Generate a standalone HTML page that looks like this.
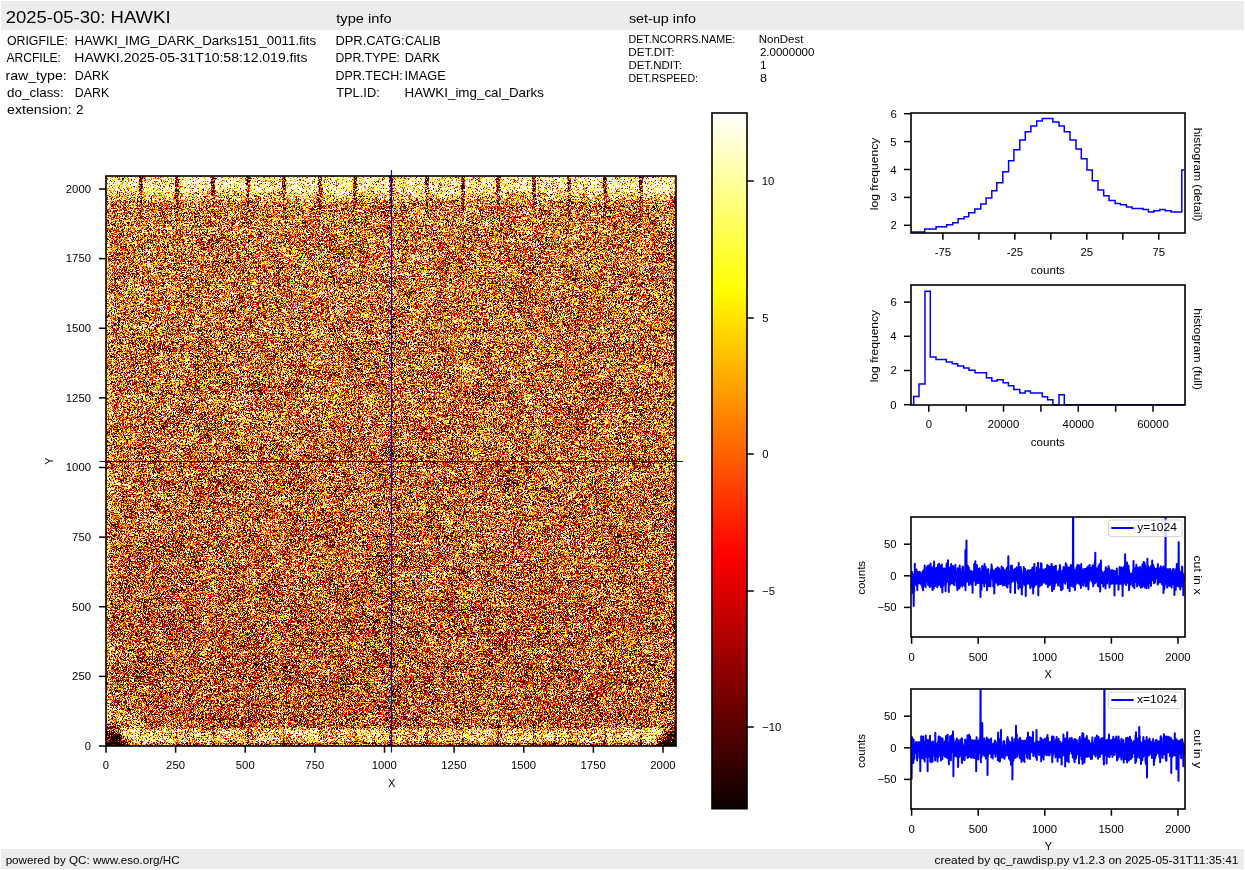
<!DOCTYPE html>
<html><head><meta charset="utf-8"><style>
html,body{margin:0;padding:0;background:#fff;width:1245px;height:870px;overflow:hidden}
#img{position:absolute;left:106px;top:176px;width:570px;height:570px}
#s{position:absolute;left:0;top:0}
text{font-family:"Liberation Sans", sans-serif;fill:#000}
</style></head><body>
<svg style="position:absolute;left:106px;top:176px" width="570" height="570"><filter id="nz" x="0" y="0" width="100%" height="100%" color-interpolation-filters="sRGB"><feTurbulence type="fractalNoise" baseFrequency="0.95" numOctaves="2" seed="5"/><feColorMatrix type="matrix" values="1 0 0 0 0 1 0 0 0 0 1 0 0 0 0 0 0 0 0 1"/><feComponentTransfer><feFuncR type="table" tableValues="0.000 0.000 0.000 0.000 0.000 0.000 0.000 0.000 0.000 0.000 0.000 0.086 0.342 0.599 0.856 1.000 1.000 1.000 1.000 1.000 1.000 1.000 1.000 1.000 1.000 1.000 1.000 1.000 1.000 1.000 1.000 1.000 1.000"/><feFuncG type="table" tableValues="0.000 0.000 0.000 0.000 0.000 0.000 0.000 0.000 0.000 0.000 0.000 0.000 0.000 0.000 0.000 0.108 0.354 0.600 0.846 1.000 1.000 1.000 1.000 1.000 1.000 1.000 1.000 1.000 1.000 1.000 1.000 1.000 1.000"/><feFuncB type="table" tableValues="0.000 0.000 0.000 0.000 0.000 0.000 0.000 0.000 0.000 0.000 0.000 0.000 0.000 0.000 0.000 0.000 0.000 0.000 0.000 0.139 0.508 0.877 1.000 1.000 1.000 1.000 1.000 1.000 1.000 1.000 1.000 1.000 1.000"/></feComponentTransfer></filter><rect width="570" height="570" fill="#c8702c" filter="url(#nz)"/><rect width="570" height="20" fill="#fff8c0" opacity="0.5"/><rect y="553" width="570" height="14" fill="#fff8c0" opacity="0.4"/></svg>
<canvas id="img" width="570" height="570"></canvas>
<svg id="s" width="1245" height="870">
<rect x="1" y="1" width="1243" height="29" fill="#ececec"/>
<rect x="1" y="849" width="1243" height="20" fill="#ececec"/>
<text x="5.67" y="22.80" font-size="17.15" textLength="164.93" lengthAdjust="spacingAndGlyphs">2025-05-30: HAWKI</text>
<text x="336.28" y="22.90" font-size="12.6" textLength="55.34" lengthAdjust="spacingAndGlyphs">type info</text>
<text x="628.90" y="22.80" font-size="12.6" textLength="67.10" lengthAdjust="spacingAndGlyphs">set-up info</text>
<text x="6.92" y="45.30" font-size="12.35" textLength="61.01" lengthAdjust="spacingAndGlyphs">ORIGFILE:</text>
<text x="74.41" y="45.30" font-size="12.35" textLength="241.77" lengthAdjust="spacingAndGlyphs">HAWKI_IMG_DARK_Darks151_0011.fits</text>
<text x="6.38" y="62.00" font-size="12.35" textLength="54.53" lengthAdjust="spacingAndGlyphs">ARCFILE:</text>
<text x="74.35" y="62.00" font-size="12.35" textLength="233.15" lengthAdjust="spacingAndGlyphs">HAWKI.2025-05-31T10:58:12.019.fits</text>
<text x="5.46" y="79.60" font-size="12.35" textLength="61.33" lengthAdjust="spacingAndGlyphs">raw_type:</text>
<text x="74.79" y="79.60" font-size="12.35" textLength="34.35" lengthAdjust="spacingAndGlyphs">DARK</text>
<text x="7.14" y="96.80" font-size="12.35" textLength="56.69" lengthAdjust="spacingAndGlyphs">do_class:</text>
<text x="74.79" y="96.80" font-size="12.35" textLength="34.35" lengthAdjust="spacingAndGlyphs">DARK</text>
<text x="7.10" y="113.70" font-size="12.35" textLength="64.60" lengthAdjust="spacingAndGlyphs">extension:</text>
<text x="76.02" y="113.70" font-size="12.35" textLength="7.57" lengthAdjust="spacingAndGlyphs">2</text>
<text x="335.46" y="44.80" font-size="12.35" textLength="69.20" lengthAdjust="spacingAndGlyphs">DPR.CATG:</text>
<text x="405.07" y="44.80" font-size="12.35" textLength="35.57" lengthAdjust="spacingAndGlyphs">CALIB</text>
<text x="335.50" y="61.90" font-size="12.35" textLength="64.52" lengthAdjust="spacingAndGlyphs">DPR.TYPE:</text>
<text x="404.65" y="61.90" font-size="12.35" textLength="35.49" lengthAdjust="spacingAndGlyphs">DARK</text>
<text x="335.47" y="79.70" font-size="12.35" textLength="67.37" lengthAdjust="spacingAndGlyphs">DPR.TECH:</text>
<text x="404.52" y="79.70" font-size="12.35" textLength="41.13" lengthAdjust="spacingAndGlyphs">IMAGE</text>
<text x="336.21" y="96.80" font-size="12.35" textLength="43.56" lengthAdjust="spacingAndGlyphs">TPL.ID:</text>
<text x="404.61" y="96.80" font-size="12.35" textLength="139.28" lengthAdjust="spacingAndGlyphs">HAWKI_img_cal_Darks</text>
<text x="628.43" y="43.00" font-size="11.05" textLength="106.94" lengthAdjust="spacingAndGlyphs">DET.NCORRS.NAME:</text>
<text x="758.76" y="43.00" font-size="11.05" textLength="44.62" lengthAdjust="spacingAndGlyphs">NonDest</text>
<text x="628.39" y="55.80" font-size="11.05" textLength="46.22" lengthAdjust="spacingAndGlyphs">DET.DIT:</text>
<text x="759.92" y="55.80" font-size="11.05" textLength="54.53" lengthAdjust="spacingAndGlyphs">2.0000000</text>
<text x="628.40" y="68.70" font-size="11.05" textLength="53.60" lengthAdjust="spacingAndGlyphs">DET.NDIT:</text>
<text x="759.90" y="68.70" font-size="11.05" textLength="6.58" lengthAdjust="spacingAndGlyphs">1</text>
<text x="628.44" y="81.70" font-size="11.05" textLength="69.61" lengthAdjust="spacingAndGlyphs">DET.RSPEED:</text>
<text x="759.95" y="81.70" font-size="11.05" textLength="6.99" lengthAdjust="spacingAndGlyphs">8</text>
<text x="5.65" y="863.80" font-size="10.4" textLength="173.89" lengthAdjust="spacingAndGlyphs">powered by QC: www.eso.org/HC</text>
<text x="934.60" y="863.80" font-size="10.4" textLength="303.88" lengthAdjust="spacingAndGlyphs">created by qc_rawdisp.py v1.2.3 on 2025-05-31T11:35:41</text>
<line x1="391.5" y1="170" x2="391.5" y2="752.5" stroke="#0000ff" stroke-width="1.15"/>
<line x1="99.5" y1="461.5" x2="683" y2="461.5" stroke="#0000ff" stroke-width="1.15"/>
<rect x="106" y="176" width="570" height="570" fill="none" stroke="#000" stroke-width="1.6"/>
<line x1="99" y1="746.0" x2="106" y2="746.0" stroke="#000" stroke-width="1.5"/>
<text x="84.74" y="749.80" font-size="11" textLength="6.30" lengthAdjust="spacingAndGlyphs">0</text>
<line x1="106.0" y1="746" x2="106.0" y2="752.7" stroke="#000" stroke-width="1.5"/>
<text x="102.85" y="768.90" font-size="11" textLength="6.30" lengthAdjust="spacingAndGlyphs">0</text>
<line x1="99" y1="676.375" x2="106" y2="676.375" stroke="#000" stroke-width="1.5"/>
<text x="72.14" y="680.17" font-size="11" textLength="18.90" lengthAdjust="spacingAndGlyphs">250</text>
<line x1="175.625" y1="746" x2="175.625" y2="752.7" stroke="#000" stroke-width="1.5"/>
<text x="166.11" y="768.90" font-size="11" textLength="18.90" lengthAdjust="spacingAndGlyphs">250</text>
<line x1="99" y1="606.75" x2="106" y2="606.75" stroke="#000" stroke-width="1.5"/>
<text x="72.14" y="610.55" font-size="11" textLength="18.90" lengthAdjust="spacingAndGlyphs">500</text>
<line x1="245.25" y1="746" x2="245.25" y2="752.7" stroke="#000" stroke-width="1.5"/>
<text x="235.79" y="768.90" font-size="11" textLength="18.90" lengthAdjust="spacingAndGlyphs">500</text>
<line x1="99" y1="537.125" x2="106" y2="537.125" stroke="#000" stroke-width="1.5"/>
<text x="72.14" y="540.92" font-size="11" textLength="18.90" lengthAdjust="spacingAndGlyphs">750</text>
<line x1="314.875" y1="746" x2="314.875" y2="752.7" stroke="#000" stroke-width="1.5"/>
<text x="305.35" y="768.90" font-size="11" textLength="18.90" lengthAdjust="spacingAndGlyphs">750</text>
<line x1="99" y1="467.5" x2="106" y2="467.5" stroke="#000" stroke-width="1.5"/>
<text x="65.84" y="471.30" font-size="11" textLength="25.20" lengthAdjust="spacingAndGlyphs">1000</text>
<line x1="384.5" y1="746" x2="384.5" y2="752.7" stroke="#000" stroke-width="1.5"/>
<text x="371.69" y="768.90" font-size="11" textLength="25.20" lengthAdjust="spacingAndGlyphs">1000</text>
<line x1="99" y1="397.87499999999994" x2="106" y2="397.87499999999994" stroke="#000" stroke-width="1.5"/>
<text x="65.84" y="401.67" font-size="11" textLength="25.20" lengthAdjust="spacingAndGlyphs">1250</text>
<line x1="454.12500000000006" y1="746" x2="454.12500000000006" y2="752.7" stroke="#000" stroke-width="1.5"/>
<text x="441.31" y="768.90" font-size="11" textLength="25.20" lengthAdjust="spacingAndGlyphs">1250</text>
<line x1="99" y1="328.24999999999994" x2="106" y2="328.24999999999994" stroke="#000" stroke-width="1.5"/>
<text x="65.84" y="332.05" font-size="11" textLength="25.20" lengthAdjust="spacingAndGlyphs">1500</text>
<line x1="523.75" y1="746" x2="523.75" y2="752.7" stroke="#000" stroke-width="1.5"/>
<text x="510.94" y="768.90" font-size="11" textLength="25.20" lengthAdjust="spacingAndGlyphs">1500</text>
<line x1="99" y1="258.62499999999994" x2="106" y2="258.62499999999994" stroke="#000" stroke-width="1.5"/>
<text x="65.84" y="262.42" font-size="11" textLength="25.20" lengthAdjust="spacingAndGlyphs">1750</text>
<line x1="593.375" y1="746" x2="593.375" y2="752.7" stroke="#000" stroke-width="1.5"/>
<text x="580.56" y="768.90" font-size="11" textLength="25.20" lengthAdjust="spacingAndGlyphs">1750</text>
<line x1="99" y1="189.0" x2="106" y2="189.0" stroke="#000" stroke-width="1.5"/>
<text x="65.84" y="192.80" font-size="11" textLength="25.20" lengthAdjust="spacingAndGlyphs">2000</text>
<line x1="663.0" y1="746" x2="663.0" y2="752.7" stroke="#000" stroke-width="1.5"/>
<text x="650.33" y="768.90" font-size="11" textLength="25.20" lengthAdjust="spacingAndGlyphs">2000</text>
<text x="387.92" y="787.00" font-size="11" textLength="7.34" lengthAdjust="spacingAndGlyphs">X</text>
<text x="-3.67" y="0" font-size="11" textLength="7.34" lengthAdjust="spacingAndGlyphs" transform="translate(53.00 461.00) rotate(-90)">Y</text>
<defs><linearGradient id="hot" x1="0" y1="1" x2="0" y2="0"><stop offset="0" stop-color="#0b0000"/><stop offset="0.365" stop-color="#ff0000"/><stop offset="0.746" stop-color="#ffff00"/><stop offset="1" stop-color="#ffffff"/></linearGradient></defs>
<rect x="712" y="113" width="35" height="695.7" fill="url(#hot)"/>
<rect x="712" y="113" width="35" height="695.7" fill="none" stroke="#000" stroke-width="1.6"/>
<line x1="747" y1="181" x2="753.8" y2="181" stroke="#000" stroke-width="1.5"/>
<text x="761.74" y="184.80" font-size="11" textLength="12.60" lengthAdjust="spacingAndGlyphs">10</text>
<line x1="747" y1="318" x2="753.8" y2="318" stroke="#000" stroke-width="1.5"/>
<text x="762.15" y="321.80" font-size="11" textLength="6.30" lengthAdjust="spacingAndGlyphs">5</text>
<line x1="747" y1="454" x2="753.8" y2="454" stroke="#000" stroke-width="1.5"/>
<text x="762.16" y="457.80" font-size="11" textLength="6.30" lengthAdjust="spacingAndGlyphs">0</text>
<line x1="747" y1="591" x2="753.8" y2="591" stroke="#000" stroke-width="1.5"/>
<text x="762.04" y="594.80" font-size="11" textLength="12.92" lengthAdjust="spacingAndGlyphs">−5</text>
<line x1="747" y1="727" x2="753.8" y2="727" stroke="#000" stroke-width="1.5"/>
<text x="762.04" y="730.80" font-size="11" textLength="19.22" lengthAdjust="spacingAndGlyphs">−10</text>
<line x1="904" y1="113.7" x2="911" y2="113.7" stroke="#000" stroke-width="1.5"/>
<text x="890.40" y="117.70" font-size="11" textLength="6.30" lengthAdjust="spacingAndGlyphs">6</text>
<line x1="904" y1="141.6" x2="911" y2="141.6" stroke="#000" stroke-width="1.5"/>
<text x="890.37" y="145.60" font-size="11" textLength="6.30" lengthAdjust="spacingAndGlyphs">5</text>
<line x1="904" y1="169.5" x2="911" y2="169.5" stroke="#000" stroke-width="1.5"/>
<text x="890.23" y="173.50" font-size="11" textLength="6.30" lengthAdjust="spacingAndGlyphs">4</text>
<line x1="904" y1="197.39999999999998" x2="911" y2="197.39999999999998" stroke="#000" stroke-width="1.5"/>
<text x="890.40" y="201.40" font-size="11" textLength="6.30" lengthAdjust="spacingAndGlyphs">3</text>
<line x1="904" y1="225.3" x2="911" y2="225.3" stroke="#000" stroke-width="1.5"/>
<text x="890.47" y="229.30" font-size="11" textLength="6.30" lengthAdjust="spacingAndGlyphs">2</text>
<line x1="942.9" y1="233" x2="942.9" y2="239.7" stroke="#000" stroke-width="1.5"/>
<text x="934.70" y="256.00" font-size="11" textLength="16.38" lengthAdjust="spacingAndGlyphs">-75</text>
<line x1="978.875" y1="233" x2="978.875" y2="239.7" stroke="#000" stroke-width="1.5"/>
<line x1="1014.85" y1="233" x2="1014.85" y2="239.7" stroke="#000" stroke-width="1.5"/>
<text x="1006.65" y="256.00" font-size="11" textLength="16.38" lengthAdjust="spacingAndGlyphs">-25</text>
<line x1="1050.825" y1="233" x2="1050.825" y2="239.7" stroke="#000" stroke-width="1.5"/>
<line x1="1086.8" y1="233" x2="1086.8" y2="239.7" stroke="#000" stroke-width="1.5"/>
<text x="1080.45" y="256.00" font-size="11" textLength="12.60" lengthAdjust="spacingAndGlyphs">25</text>
<line x1="1122.775" y1="233" x2="1122.775" y2="239.7" stroke="#000" stroke-width="1.5"/>
<line x1="1158.75" y1="233" x2="1158.75" y2="239.7" stroke="#000" stroke-width="1.5"/>
<text x="1152.40" y="256.00" font-size="11" textLength="12.60" lengthAdjust="spacingAndGlyphs">75</text>
<text x="1030.81" y="274.00" font-size="11" textLength="34.11" lengthAdjust="spacingAndGlyphs">counts</text>
<text x="-36.61" y="0" font-size="11" textLength="72.44" lengthAdjust="spacingAndGlyphs" transform="translate(877.60 173.60) rotate(-90)">log frequency</text>
<text x="-46.79" y="0" font-size="11" textLength="93.49" lengthAdjust="spacingAndGlyphs" transform="translate(1194.30 174.65) rotate(90)">histogram (detail)</text>
<path d="M911.5,232.1H924.7V228.9H936.1V226.8H946.7V224.8H952.8V222.8H958.1V218.7H964.2V216.8H968.7V212.7H974.8V208.9H980.8V203.9H986.1V197.9H991.8V190.7H996.8V182.8H1002.8V171.7H1008.6V160.8H1013.9V149.7H1019.8V139.9H1025.3V131.8H1030.9V125.9H1036.7V120.9H1042.3V118.6H1052.9V122H1059V125.9H1064.3V131.8H1070V139.9H1076V149H1081.3V158.8H1087V169.9H1092.3V180.8H1098V189.9H1103.7V195.7H1109V200.5H1115.1V203.6H1120.4V204.8H1126.5V206.9H1132.1V208.6H1143.1V209.6H1148.4V211.9H1153.8V210.8H1159.8V209.6H1165.1V210.8H1171.2V211.9H1181.8V169.9H1184.2" fill="none" stroke="#0000ff" stroke-width="1.5"/>
<rect x="911" y="113" width="274" height="120" fill="none" stroke="#000" stroke-width="1.6"/>
<line x1="904" y1="404.7" x2="911" y2="404.7" stroke="#000" stroke-width="1.5"/>
<text x="890.34" y="408.60" font-size="11" textLength="6.30" lengthAdjust="spacingAndGlyphs">0</text>
<line x1="904" y1="370.5" x2="911" y2="370.5" stroke="#000" stroke-width="1.5"/>
<text x="890.47" y="374.40" font-size="11" textLength="6.30" lengthAdjust="spacingAndGlyphs">2</text>
<line x1="904" y1="336.29999999999995" x2="911" y2="336.29999999999995" stroke="#000" stroke-width="1.5"/>
<text x="890.23" y="340.20" font-size="11" textLength="6.30" lengthAdjust="spacingAndGlyphs">4</text>
<line x1="904" y1="302.09999999999997" x2="911" y2="302.09999999999997" stroke="#000" stroke-width="1.5"/>
<text x="890.40" y="306.00" font-size="11" textLength="6.30" lengthAdjust="spacingAndGlyphs">6</text>
<line x1="928.8" y1="405" x2="928.8" y2="411.7" stroke="#000" stroke-width="1.5"/>
<text x="925.65" y="428.00" font-size="11" textLength="6.30" lengthAdjust="spacingAndGlyphs">0</text>
<line x1="966.17" y1="405" x2="966.17" y2="411.7" stroke="#000" stroke-width="1.5"/>
<line x1="1003.54" y1="405" x2="1003.54" y2="411.7" stroke="#000" stroke-width="1.5"/>
<text x="987.72" y="428.00" font-size="11" textLength="31.51" lengthAdjust="spacingAndGlyphs">20000</text>
<line x1="1040.9099999999999" y1="405" x2="1040.9099999999999" y2="411.7" stroke="#000" stroke-width="1.5"/>
<line x1="1078.28" y1="405" x2="1078.28" y2="411.7" stroke="#000" stroke-width="1.5"/>
<text x="1062.62" y="428.00" font-size="11" textLength="31.51" lengthAdjust="spacingAndGlyphs">40000</text>
<line x1="1115.6499999999999" y1="405" x2="1115.6499999999999" y2="411.7" stroke="#000" stroke-width="1.5"/>
<line x1="1153.02" y1="405" x2="1153.02" y2="411.7" stroke="#000" stroke-width="1.5"/>
<text x="1137.20" y="428.00" font-size="11" textLength="31.51" lengthAdjust="spacingAndGlyphs">60000</text>
<text x="1030.81" y="446.00" font-size="11" textLength="34.11" lengthAdjust="spacingAndGlyphs">counts</text>
<text x="-36.61" y="0" font-size="11" textLength="72.44" lengthAdjust="spacingAndGlyphs" transform="translate(877.60 345.70) rotate(-90)">log frequency</text>
<text x="-40.86" y="0" font-size="11" textLength="81.62" lengthAdjust="spacingAndGlyphs" transform="translate(1194.00 349.20) rotate(90)">histogram (full)</text>
<path d="M913.7,404.7V396.5H919V383.9H925V291.2H930.3V356.9H936V359.6H946.3V361.9H952.3V363.7H957.6V366H963.7V368H969V370.2H975.1V372.8H986.5V377.8H991.8V380.9H997.1V379.7H1003.1V382.8H1008.4V385.7H1013.8V389.5H1019.8V393H1025.1V391H1030.4V393H1042.3V396.8H1047.6V399.8H1052.9V404.7H1059V394.8H1064.3V404.7H1184.2" fill="none" stroke="#0000ff" stroke-width="1.5"/>
<rect x="911" y="285" width="274" height="120" fill="none" stroke="#000" stroke-width="1.6"/>
<svg x="911" y="517" width="274" height="120" overflow="hidden"><path transform="translate(-911,-517)" d="M911.6,578.5 911.7,579.7 911.9,571.7 912.0,586.2 912.1,572.8 912.3,575.1 912.4,592.9 912.5,581.0 912.7,575.6 912.8,579.8 912.9,583.7 913.1,591.1 913.2,582.6 913.3,590.1 913.5,578.6 913.6,594.8 913.7,606.1 913.9,576.3 914.0,576.6 914.1,592.1 914.3,573.4 914.4,583.2 914.5,583.6 914.7,583.7 914.8,563.7 914.9,576.4 915.1,573.8 915.2,573.2 915.3,569.9 915.5,576.8 915.6,579.4 915.7,579.9 915.9,574.6 916.0,574.8 916.1,581.0 916.3,585.2 916.4,569.5 916.5,572.5 916.7,576.7 916.8,578.7 916.9,572.2 917.1,580.1 917.2,578.5 917.3,590.2 917.5,572.3 917.6,574.0 917.7,579.1 917.9,574.7 918.0,580.4 918.1,572.9 918.3,577.8 918.4,581.2 918.5,580.0 918.7,572.3 918.8,577.4 918.9,573.0 919.1,583.3 919.2,576.8 919.3,578.5 919.5,571.7 919.6,582.7 919.7,576.1 919.9,575.4 920.0,573.1 920.1,575.1 920.3,572.8 920.4,572.5 920.5,581.2 920.7,583.7 920.8,575.4 920.9,576.2 921.1,575.3 921.2,576.7 921.3,577.0 921.5,581.4 921.6,585.3 921.7,579.1 921.9,579.3 922.0,586.1 922.1,581.3 922.3,587.7 922.4,573.6 922.5,587.4 922.7,582.0 922.8,571.4 922.9,588.0 923.1,590.3 923.2,583.5 923.3,570.5 923.5,575.2 923.6,578.5 923.7,581.7 923.9,580.3 924.0,584.3 924.1,576.3 924.3,571.6 924.4,576.1 924.5,570.5 924.7,565.6 924.8,572.5 924.9,579.6 925.1,585.8 925.2,572.1 925.3,582.1 925.5,571.4 925.6,587.3 925.7,576.2 925.9,572.1 926.0,577.8 926.1,577.1 926.3,572.5 926.4,581.4 926.5,576.2 926.7,578.6 926.8,575.8 926.9,567.8 927.1,574.1 927.2,576.1 927.3,577.5 927.5,565.9 927.6,574.8 927.7,568.8 927.9,574.1 928.0,582.2 928.1,585.0 928.2,574.4 928.4,567.5 928.5,585.3 928.6,574.9 928.8,581.4 928.9,569.2 929.0,576.2 929.2,582.1 929.3,565.2 929.4,569.5 929.6,584.1 929.7,574.1 929.8,587.1 930.0,581.3 930.1,584.5 930.2,574.6 930.4,573.0 930.5,583.8 930.6,563.5 930.8,585.8 930.9,575.2 931.0,581.3 931.2,577.8 931.3,574.5 931.4,575.7 931.6,583.0 931.7,567.0 931.8,572.4 932.0,575.7 932.1,579.5 932.2,578.2 932.4,587.2 932.5,590.3 932.6,575.8 932.8,581.1 932.9,577.2 933.0,587.3 933.2,578.0 933.3,584.5 933.4,569.0 933.6,567.6 933.7,588.5 933.8,574.3 934.0,569.7 934.1,561.6 934.2,573.8 934.4,574.1 934.5,583.4 934.6,570.0 934.8,573.6 934.9,572.4 935.0,578.5 935.2,586.0 935.3,572.2 935.4,578.0 935.6,573.0 935.7,569.6 935.8,569.2 936.0,575.2 936.1,567.9 936.2,578.4 936.4,578.3 936.5,580.7 936.6,576.7 936.8,581.5 936.9,574.3 937.0,574.4 937.2,573.2 937.3,587.3 937.4,578.5 937.6,575.4 937.7,567.1 937.8,578.4 938.0,571.9 938.1,564.5 938.2,576.6 938.4,577.1 938.5,580.8 938.6,585.3 938.8,571.7 938.9,576.9 939.0,577.4 939.2,563.7 939.3,584.3 939.4,576.1 939.6,583.1 939.7,574.0 939.8,575.3 940.0,583.8 940.1,577.1 940.2,573.3 940.4,566.0 940.5,574.8 940.6,575.3 940.8,576.0 940.9,581.5 941.0,587.2 941.2,573.2 941.3,574.4 941.4,579.4 941.6,579.5 941.7,574.3 941.8,564.5 942.0,575.3 942.1,571.3 942.2,582.6 942.4,592.6 942.5,576.9 942.6,568.5 942.8,581.4 942.9,586.5 943.0,569.7 943.2,575.4 943.3,586.1 943.4,571.7 943.6,573.4 943.7,581.4 943.8,570.0 944.0,568.5 944.1,579.3 944.2,582.8 944.4,579.4 944.5,582.0 944.6,583.3 944.8,568.6 944.9,575.3 945.0,577.9 945.2,575.4 945.3,572.9 945.4,573.9 945.6,591.3 945.7,577.2 945.8,583.1 946.0,584.3 946.1,576.3 946.2,578.2 946.4,579.8 946.5,575.8 946.6,563.6 946.8,571.5 946.9,580.9 947.0,579.6 947.2,580.7 947.3,578.2 947.4,572.2 947.6,576.1 947.7,576.3 947.8,582.1 948.0,560.2 948.1,571.1 948.2,571.4 948.4,579.8 948.5,576.2 948.6,569.5 948.8,591.9 948.9,573.3 949.0,570.5 949.2,571.2 949.3,569.8 949.4,574.2 949.6,579.5 949.7,581.9 949.8,585.1 950.0,571.7 950.1,567.6 950.2,579.1 950.4,568.6 950.5,582.7 950.6,577.6 950.8,567.9 950.9,582.8 951.0,583.5 951.2,563.9 951.3,578.0 951.4,572.2 951.6,574.7 951.7,570.7 951.8,572.2 952.0,579.6 952.1,582.9 952.2,580.3 952.4,575.9 952.5,575.3 952.6,578.3 952.8,583.4 952.9,583.3 953.0,577.0 953.2,566.1 953.3,571.4 953.4,576.8 953.6,571.2 953.7,579.3 953.8,574.8 954.0,578.1 954.1,585.0 954.2,575.6 954.4,572.9 954.5,574.6 954.6,579.5 954.8,567.8 954.9,573.1 955.0,572.2 955.2,569.8 955.3,570.4 955.4,564.7 955.6,581.1 955.7,578.1 955.8,571.8 956.0,573.0 956.1,579.1 956.2,580.2 956.4,572.1 956.5,585.8 956.6,580.4 956.8,579.7 956.9,577.8 957.0,576.7 957.2,575.2 957.3,589.9 957.4,582.5 957.6,569.8 957.7,573.6 957.8,568.3 958.0,571.9 958.1,578.5 958.2,578.8 958.4,576.3 958.5,572.4 958.6,575.9 958.8,582.1 958.9,579.5 959.0,582.3 959.2,579.7 959.3,588.6 959.4,582.0 959.6,586.1 959.7,565.5 959.8,585.6 960.0,579.0 960.1,586.4 960.2,570.8 960.4,569.0 960.5,574.5 960.6,573.1 960.8,574.5 960.9,576.8 961.0,582.3 961.2,584.3 961.3,583.7 961.4,574.5 961.6,573.6 961.7,574.1 961.8,578.0 961.9,583.9 962.1,577.1 962.2,573.0 962.3,586.4 962.5,579.6 962.6,566.8 962.7,584.6 962.9,570.1 963.0,578.2 963.1,566.8 963.3,579.7 963.4,581.0 963.5,576.9 963.7,576.4 963.8,575.6 963.9,573.8 964.1,585.0 964.2,573.7 964.3,572.3 964.5,584.5 964.6,577.3 964.7,579.6 964.9,577.8 965.0,571.7 965.1,586.3 965.3,577.6 965.4,549.9 965.5,590.3 965.7,573.7 965.8,579.7 965.9,567.0 966.1,567.5 966.2,570.7 966.3,556.8 966.5,540.4 966.6,577.3 966.7,574.3 966.9,577.6 967.0,581.7 967.1,581.4 967.3,572.5 967.4,576.9 967.5,577.2 967.7,575.9 967.8,565.8 967.9,566.2 968.1,577.0 968.2,577.8 968.3,571.1 968.5,579.4 968.6,571.6 968.7,573.6 968.9,567.7 969.0,584.9 969.1,579.9 969.3,573.8 969.4,574.7 969.5,577.4 969.7,579.9 969.8,578.5 969.9,577.8 970.1,572.3 970.2,572.3 970.3,582.5 970.5,573.4 970.6,574.0 970.7,581.5 970.9,570.7 971.0,575.9 971.1,574.4 971.3,584.5 971.4,579.0 971.5,571.9 971.7,581.3 971.8,571.7 971.9,579.0 972.1,578.6 972.2,581.5 972.3,578.0 972.5,580.2 972.6,592.7 972.7,574.5 972.9,579.7 973.0,575.7 973.1,574.2 973.3,578.1 973.4,581.2 973.5,579.3 973.7,575.8 973.8,570.6 973.9,580.5 974.1,577.6 974.2,564.0 974.3,578.8 974.5,578.2 974.6,573.1 974.7,579.0 974.9,573.6 975.0,569.8 975.1,569.3 975.3,561.3 975.4,579.4 975.5,568.5 975.7,585.0 975.8,582.0 975.9,579.5 976.1,575.8 976.2,573.3 976.3,570.3 976.5,580.5 976.6,569.3 976.7,567.6 976.9,565.1 977.0,583.2 977.1,572.2 977.3,576.4 977.4,583.0 977.5,572.9 977.7,581.0 977.8,570.7 977.9,580.3 978.1,572.3 978.2,579.3 978.3,569.0 978.5,581.9 978.6,579.0 978.7,569.2 978.9,582.8 979.0,574.2 979.1,578.8 979.3,583.0 979.4,579.7 979.5,573.9 979.7,568.2 979.8,578.2 979.9,575.1 980.1,580.2 980.2,574.3 980.3,577.9 980.5,597.1 980.6,579.7 980.7,578.0 980.9,571.6 981.0,574.1 981.1,581.7 981.3,575.1 981.4,576.0 981.5,589.7 981.7,576.3 981.8,575.1 981.9,571.8 982.1,572.8 982.2,566.2 982.3,570.9 982.5,566.1 982.6,578.9 982.7,579.2 982.9,569.2 983.0,570.8 983.1,570.3 983.3,583.0 983.4,570.7 983.5,578.8 983.7,579.6 983.8,568.0 983.9,575.7 984.1,568.1 984.2,582.6 984.3,586.5 984.5,580.5 984.6,564.1 984.7,578.0 984.9,578.3 985.0,583.3 985.1,577.7 985.3,577.4 985.4,572.2 985.5,578.5 985.7,567.1 985.8,579.9 985.9,577.5 986.1,570.2 986.2,575.1 986.3,570.4 986.5,579.3 986.6,579.7 986.7,580.7 986.9,583.1 987.0,577.1 987.1,590.3 987.3,578.2 987.4,572.5 987.5,569.7 987.7,575.0 987.8,586.3 987.9,580.4 988.1,576.2 988.2,569.0 988.3,574.7 988.5,573.9 988.6,579.0 988.7,582.5 988.9,576.3 989.0,575.8 989.1,578.5 989.3,586.1 989.4,579.1 989.5,577.1 989.7,574.9 989.8,580.8 989.9,577.1 990.1,574.9 990.2,579.6 990.3,580.3 990.5,586.4 990.6,581.0 990.7,573.5 990.9,570.1 991.0,574.7 991.1,572.6 991.3,571.5 991.4,575.7 991.5,564.5 991.7,578.2 991.8,570.7 991.9,566.8 992.1,576.7 992.2,576.6 992.3,569.2 992.5,571.5 992.6,578.7 992.7,577.7 992.9,577.5 993.0,571.6 993.1,574.6 993.3,586.4 993.4,582.8 993.5,573.4 993.7,581.1 993.8,578.5 993.9,573.5 994.1,575.3 994.2,572.6 994.3,593.4 994.5,570.6 994.6,574.9 994.7,571.1 994.9,579.4 995.0,573.0 995.1,576.9 995.2,570.8 995.4,577.1 995.5,571.1 995.6,582.6 995.8,569.0 995.9,571.5 996.0,575.8 996.2,572.7 996.3,579.8 996.4,571.1 996.6,574.5 996.7,572.0 996.8,570.2 997.0,582.8 997.1,573.2 997.2,577.0 997.4,567.3 997.5,575.1 997.6,572.0 997.8,585.1 997.9,569.0 998.0,578.7 998.2,573.2 998.3,581.4 998.4,581.8 998.6,579.0 998.7,568.3 998.8,579.6 999.0,584.3 999.1,575.7 999.2,568.4 999.4,578.0 999.5,575.2 999.6,581.0 999.8,576.3 999.9,579.8 1000.0,575.9 1000.2,572.1 1000.3,573.6 1000.4,584.1 1000.6,580.8 1000.7,570.8 1000.8,575.6 1001.0,578.0 1001.1,575.4 1001.2,581.4 1001.4,575.5 1001.5,583.3 1001.6,566.6 1001.8,578.2 1001.9,579.6 1002.0,571.3 1002.2,577.9 1002.3,575.4 1002.4,584.4 1002.6,580.4 1002.7,574.1 1002.8,585.6 1003.0,568.0 1003.1,581.3 1003.2,576.6 1003.4,574.2 1003.5,573.4 1003.6,576.4 1003.8,576.2 1003.9,576.0 1004.0,569.8 1004.2,581.6 1004.3,581.6 1004.4,579.1 1004.6,571.9 1004.7,578.3 1004.8,585.0 1005.0,574.9 1005.1,579.4 1005.2,581.5 1005.4,578.6 1005.5,580.5 1005.6,577.3 1005.8,573.4 1005.9,570.3 1006.0,574.0 1006.2,575.3 1006.3,585.8 1006.4,573.5 1006.6,568.8 1006.7,585.0 1006.8,586.6 1007.0,576.9 1007.1,576.5 1007.2,567.4 1007.4,575.8 1007.5,587.4 1007.6,584.3 1007.8,572.2 1007.9,575.5 1008.0,579.2 1008.2,576.1 1008.3,556.2 1008.4,562.4 1008.6,581.9 1008.7,583.5 1008.8,572.5 1009.0,574.6 1009.1,576.6 1009.2,571.9 1009.4,575.2 1009.5,572.7 1009.6,572.9 1009.8,581.9 1009.9,575.8 1010.0,574.0 1010.2,580.4 1010.3,574.9 1010.4,592.4 1010.6,586.2 1010.7,579.3 1010.8,566.1 1011.0,568.2 1011.1,572.8 1011.2,573.0 1011.4,571.5 1011.5,570.2 1011.6,581.8 1011.8,575.8 1011.9,565.4 1012.0,571.7 1012.2,573.7 1012.3,570.5 1012.4,572.0 1012.6,581.3 1012.7,578.0 1012.8,575.2 1013.0,579.7 1013.1,579.6 1013.2,570.3 1013.4,576.7 1013.5,575.8 1013.6,575.2 1013.8,571.6 1013.9,574.0 1014.0,577.3 1014.2,576.5 1014.3,569.5 1014.4,575.9 1014.6,577.0 1014.7,582.2 1014.8,574.6 1015.0,592.9 1015.1,583.7 1015.2,571.3 1015.4,569.1 1015.5,575.3 1015.6,582.1 1015.8,570.3 1015.9,579.9 1016.0,580.5 1016.2,577.5 1016.3,574.2 1016.4,574.2 1016.6,567.3 1016.7,575.2 1016.8,574.0 1017.0,577.1 1017.1,576.1 1017.2,579.5 1017.4,570.1 1017.5,572.8 1017.6,579.8 1017.8,570.4 1017.9,576.9 1018.0,583.9 1018.2,571.6 1018.3,582.5 1018.4,588.8 1018.6,587.1 1018.7,563.0 1018.8,582.3 1019.0,570.8 1019.1,567.9 1019.2,583.7 1019.4,579.0 1019.5,577.6 1019.6,584.5 1019.8,574.0 1019.9,575.5 1020.0,568.8 1020.2,568.6 1020.3,574.8 1020.4,587.3 1020.6,583.8 1020.7,567.1 1020.8,576.8 1021.0,570.7 1021.1,576.8 1021.2,569.8 1021.4,576.8 1021.5,584.4 1021.6,587.2 1021.8,594.5 1021.9,577.8 1022.0,577.5 1022.2,580.6 1022.3,587.5 1022.4,579.0 1022.6,577.8 1022.7,578.2 1022.8,580.7 1023.0,576.2 1023.1,575.5 1023.2,583.6 1023.4,573.3 1023.5,572.0 1023.6,582.9 1023.8,567.1 1023.9,574.1 1024.0,571.3 1024.2,574.6 1024.3,577.7 1024.4,584.4 1024.6,584.9 1024.7,579.4 1024.8,581.7 1025.0,579.6 1025.1,569.1 1025.2,577.7 1025.4,579.8 1025.5,579.4 1025.6,575.8 1025.8,596.0 1025.9,579.8 1026.0,579.8 1026.2,585.1 1026.3,579.1 1026.4,574.7 1026.6,573.9 1026.7,581.7 1026.8,571.5 1027.0,578.3 1027.1,580.5 1027.2,578.7 1027.4,571.2 1027.5,583.2 1027.6,583.6 1027.8,570.3 1027.9,571.0 1028.0,574.1 1028.2,571.9 1028.3,577.8 1028.4,576.2 1028.5,570.6 1028.7,576.5 1028.8,570.5 1028.9,572.0 1029.1,582.6 1029.2,574.5 1029.3,577.9 1029.5,577.9 1029.6,584.8 1029.7,575.3 1029.9,576.8 1030.0,580.5 1030.1,571.6 1030.3,588.3 1030.4,585.7 1030.5,584.9 1030.7,569.9 1030.8,574.3 1030.9,576.5 1031.1,578.7 1031.2,579.7 1031.3,578.6 1031.5,574.1 1031.6,573.5 1031.7,574.7 1031.9,576.6 1032.0,580.8 1032.1,576.0 1032.3,579.3 1032.4,567.7 1032.5,587.0 1032.7,580.6 1032.8,570.8 1032.9,575.3 1033.1,581.1 1033.2,593.5 1033.3,577.7 1033.5,579.1 1033.6,566.9 1033.7,572.7 1033.9,575.1 1034.0,587.2 1034.1,573.6 1034.3,567.9 1034.4,564.0 1034.5,585.1 1034.7,583.8 1034.8,573.2 1034.9,576.2 1035.1,577.2 1035.2,579.7 1035.3,572.7 1035.5,573.4 1035.6,575.4 1035.7,577.9 1035.9,576.6 1036.0,573.7 1036.1,584.7 1036.3,575.9 1036.4,582.5 1036.5,579.2 1036.7,579.3 1036.8,567.5 1036.9,582.3 1037.1,573.6 1037.2,578.2 1037.3,575.9 1037.5,583.5 1037.6,577.7 1037.7,572.0 1037.9,573.2 1038.0,575.3 1038.1,562.7 1038.3,595.2 1038.4,568.2 1038.5,571.2 1038.7,577.8 1038.8,578.9 1038.9,569.0 1039.1,583.3 1039.2,576.3 1039.3,572.8 1039.5,574.0 1039.6,586.5 1039.7,571.3 1039.9,577.5 1040.0,578.6 1040.1,578.8 1040.3,572.0 1040.4,577.6 1040.5,577.9 1040.7,581.5 1040.8,581.5 1040.9,563.3 1041.1,574.6 1041.2,567.1 1041.3,576.1 1041.5,563.8 1041.6,577.7 1041.7,585.3 1041.9,573.0 1042.0,579.1 1042.1,575.3 1042.3,573.9 1042.4,575.2 1042.5,579.1 1042.7,577.3 1042.8,569.4 1042.9,578.5 1043.1,582.5 1043.2,572.8 1043.3,571.9 1043.5,581.0 1043.6,582.6 1043.7,570.5 1043.9,578.5 1044.0,581.7 1044.1,576.6 1044.3,579.9 1044.4,578.4 1044.5,573.6 1044.7,582.0 1044.8,577.1 1044.9,581.2 1045.1,570.6 1045.2,580.6 1045.3,568.7 1045.5,577.3 1045.6,583.8 1045.7,573.9 1045.9,581.4 1046.0,581.8 1046.1,581.3 1046.3,582.8 1046.4,574.6 1046.5,572.5 1046.7,573.5 1046.8,578.8 1046.9,583.4 1047.1,568.3 1047.2,565.1 1047.3,568.3 1047.5,570.7 1047.6,584.0 1047.7,578.1 1047.9,587.0 1048.0,582.5 1048.1,585.6 1048.3,565.9 1048.4,570.7 1048.5,583.6 1048.7,569.4 1048.8,575.5 1048.9,576.5 1049.1,573.4 1049.2,577.4 1049.3,572.0 1049.5,570.4 1049.6,566.9 1049.7,585.3 1049.9,578.9 1050.0,567.8 1050.1,581.2 1050.3,571.5 1050.4,578.5 1050.5,581.7 1050.7,574.8 1050.8,583.8 1050.9,576.7 1051.1,573.8 1051.2,577.3 1051.3,565.4 1051.5,571.1 1051.6,564.0 1051.7,564.8 1051.9,568.6 1052.0,573.3 1052.1,591.1 1052.3,583.4 1052.4,574.9 1052.5,583.2 1052.7,573.7 1052.8,570.1 1052.9,573.6 1053.1,568.0 1053.2,570.6 1053.3,573.3 1053.5,579.3 1053.6,577.6 1053.7,580.4 1053.9,589.3 1054.0,566.4 1054.1,581.5 1054.3,584.0 1054.4,575.9 1054.5,586.5 1054.7,585.1 1054.8,575.0 1054.9,576.8 1055.1,575.2 1055.2,576.8 1055.3,579.0 1055.5,582.8 1055.6,576.4 1055.7,576.6 1055.9,565.8 1056.0,578.1 1056.1,577.0 1056.3,575.6 1056.4,582.4 1056.5,580.0 1056.7,580.4 1056.8,575.3 1056.9,573.9 1057.1,572.9 1057.2,578.5 1057.3,572.8 1057.5,580.8 1057.6,577.1 1057.7,575.9 1057.9,571.6 1058.0,581.0 1058.1,585.4 1058.3,576.1 1058.4,580.7 1058.5,571.0 1058.7,576.8 1058.8,570.8 1058.9,576.8 1059.1,575.4 1059.2,581.5 1059.3,578.2 1059.5,569.0 1059.6,576.0 1059.7,577.3 1059.9,564.9 1060.0,571.4 1060.1,566.0 1060.3,586.5 1060.4,573.6 1060.5,577.8 1060.7,575.3 1060.8,573.6 1060.9,578.5 1061.1,590.2 1061.2,573.1 1061.3,573.3 1061.5,574.3 1061.6,571.6 1061.7,575.2 1061.8,573.8 1062.0,585.2 1062.1,580.4 1062.2,572.9 1062.4,574.5 1062.5,575.6 1062.6,589.3 1062.8,580.0 1062.9,570.0 1063.0,570.2 1063.2,577.5 1063.3,580.0 1063.4,575.6 1063.6,566.9 1063.7,575.0 1063.8,574.6 1064.0,573.4 1064.1,572.5 1064.2,575.9 1064.4,580.1 1064.5,581.6 1064.6,577.0 1064.8,574.9 1064.9,580.8 1065.0,571.7 1065.2,583.8 1065.3,567.2 1065.4,582.5 1065.6,578.0 1065.7,575.0 1065.8,563.2 1066.0,572.9 1066.1,570.6 1066.2,572.1 1066.4,568.4 1066.5,568.9 1066.6,564.9 1066.8,578.4 1066.9,581.3 1067.0,570.4 1067.2,581.5 1067.3,580.9 1067.4,576.3 1067.6,578.8 1067.7,575.9 1067.8,585.9 1068.0,588.1 1068.1,567.6 1068.2,571.3 1068.4,575.1 1068.5,580.6 1068.6,582.9 1068.8,573.2 1068.9,581.1 1069.0,575.9 1069.2,578.5 1069.3,573.3 1069.4,571.2 1069.6,591.3 1069.7,573.8 1069.8,585.0 1070.0,571.8 1070.1,567.1 1070.2,575.4 1070.4,577.0 1070.5,574.4 1070.6,584.0 1070.8,577.7 1070.9,578.1 1071.0,565.0 1071.2,577.7 1071.3,579.7 1071.4,585.4 1071.6,570.0 1071.7,569.9 1071.8,575.3 1072.0,586.3 1072.1,568.8 1072.2,579.3 1072.4,577.2 1072.5,575.5 1072.6,575.3 1072.8,568.2 1072.9,581.4 1073.0,517.7 1073.2,517.7 1073.3,583.4 1073.4,565.2 1073.6,582.0 1073.7,587.1 1073.8,586.4 1074.0,577.7 1074.1,569.6 1074.2,571.9 1074.4,581.8 1074.5,576.4 1074.6,572.6 1074.8,577.4 1074.9,574.5 1075.0,590.1 1075.2,578.8 1075.3,579.9 1075.4,574.1 1075.6,572.1 1075.7,572.2 1075.8,584.1 1076.0,579.2 1076.1,576.5 1076.2,569.3 1076.4,572.8 1076.5,567.4 1076.6,580.7 1076.8,577.9 1076.9,580.5 1077.0,567.6 1077.2,582.3 1077.3,574.8 1077.4,565.0 1077.6,579.8 1077.7,577.5 1077.8,567.7 1078.0,583.1 1078.1,573.1 1078.2,581.5 1078.4,583.4 1078.5,577.2 1078.6,579.3 1078.8,574.2 1078.9,576.2 1079.0,565.3 1079.2,567.7 1079.3,580.7 1079.4,579.0 1079.6,577.8 1079.7,572.6 1079.8,581.3 1080.0,573.4 1080.1,574.1 1080.2,585.1 1080.4,582.2 1080.5,574.0 1080.6,580.5 1080.8,573.9 1080.9,588.0 1081.0,574.5 1081.2,564.0 1081.3,585.7 1081.4,580.9 1081.6,584.7 1081.7,568.5 1081.8,579.0 1082.0,578.8 1082.1,579.8 1082.2,571.3 1082.4,577.1 1082.5,584.8 1082.6,571.6 1082.8,575.4 1082.9,570.8 1083.0,574.7 1083.2,577.5 1083.3,573.5 1083.4,581.3 1083.6,575.7 1083.7,585.8 1083.8,578.5 1084.0,583.4 1084.1,569.9 1084.2,568.9 1084.4,572.1 1084.5,577.8 1084.6,579.9 1084.8,576.3 1084.9,578.9 1085.0,580.5 1085.2,571.7 1085.3,570.3 1085.4,569.1 1085.6,576.8 1085.7,576.3 1085.8,578.7 1086.0,580.4 1086.1,586.4 1086.2,580.9 1086.4,570.9 1086.5,578.2 1086.6,579.1 1086.8,572.5 1086.9,578.2 1087.0,567.8 1087.2,571.2 1087.3,585.2 1087.4,575.8 1087.6,573.9 1087.7,579.5 1087.8,582.5 1088.0,566.5 1088.1,578.8 1088.2,570.8 1088.4,589.4 1088.5,587.1 1088.6,578.8 1088.8,578.6 1088.9,582.1 1089.0,574.2 1089.2,578.0 1089.3,579.6 1089.4,573.9 1089.6,564.9 1089.7,579.1 1089.8,573.3 1090.0,577.1 1090.1,578.4 1090.2,578.6 1090.4,577.7 1090.5,568.8 1090.6,577.2 1090.8,575.5 1090.9,575.7 1091.0,577.6 1091.2,568.1 1091.3,581.0 1091.4,575.5 1091.6,579.2 1091.7,573.1 1091.8,571.6 1092.0,575.9 1092.1,568.1 1092.2,569.3 1092.4,580.9 1092.5,565.4 1092.6,581.1 1092.8,583.8 1092.9,581.6 1093.0,572.1 1093.2,586.2 1093.3,578.5 1093.4,571.7 1093.6,575.8 1093.7,579.8 1093.8,579.6 1094.0,572.0 1094.1,583.8 1094.2,581.9 1094.4,574.8 1094.5,563.8 1094.6,577.1 1094.8,576.1 1094.9,561.3 1095.0,580.6 1095.1,565.9 1095.3,552.7 1095.4,568.2 1095.5,582.7 1095.7,571.2 1095.8,570.8 1095.9,578.7 1096.1,579.5 1096.2,578.2 1096.3,578.3 1096.5,580.0 1096.6,580.3 1096.7,570.0 1096.9,574.9 1097.0,568.3 1097.1,576.0 1097.3,581.5 1097.4,569.9 1097.5,571.6 1097.7,578.0 1097.8,585.9 1097.9,575.5 1098.1,579.4 1098.2,573.1 1098.3,570.9 1098.5,577.1 1098.6,565.8 1098.7,586.4 1098.9,585.2 1099.0,584.3 1099.1,569.3 1099.3,573.8 1099.4,570.3 1099.5,578.7 1099.7,563.9 1099.8,574.8 1099.9,572.6 1100.1,581.3 1100.2,591.6 1100.3,583.1 1100.5,570.4 1100.6,582.0 1100.7,576.2 1100.9,560.5 1101.0,573.6 1101.1,571.9 1101.3,570.3 1101.4,583.1 1101.5,576.4 1101.7,576.2 1101.8,572.8 1101.9,575.5 1102.1,577.5 1102.2,572.0 1102.3,583.0 1102.5,576.8 1102.6,578.3 1102.7,575.6 1102.9,575.1 1103.0,578.2 1103.1,574.8 1103.3,586.6 1103.4,584.0 1103.5,577.3 1103.7,572.8 1103.8,578.6 1103.9,579.1 1104.1,578.7 1104.2,574.1 1104.3,581.4 1104.5,572.3 1104.6,574.1 1104.7,571.6 1104.9,581.3 1105.0,579.4 1105.1,572.7 1105.3,572.3 1105.4,579.8 1105.5,588.4 1105.7,579.0 1105.8,567.3 1105.9,573.2 1106.1,578.1 1106.2,576.2 1106.3,579.2 1106.5,572.8 1106.6,580.5 1106.7,570.5 1106.9,580.9 1107.0,572.0 1107.1,583.5 1107.3,582.5 1107.4,572.3 1107.5,569.0 1107.7,573.4 1107.8,579.3 1107.9,578.7 1108.1,572.0 1108.2,576.8 1108.3,572.3 1108.5,566.2 1108.6,577.0 1108.7,576.4 1108.9,578.6 1109.0,572.4 1109.1,568.2 1109.3,572.8 1109.4,578.4 1109.5,587.5 1109.7,578.8 1109.8,571.2 1109.9,584.9 1110.1,574.4 1110.2,572.7 1110.3,577.2 1110.5,570.7 1110.6,575.1 1110.7,584.1 1110.9,580.2 1111.0,575.2 1111.1,575.5 1111.3,579.3 1111.4,583.0 1111.5,570.3 1111.7,571.1 1111.8,573.1 1111.9,575.8 1112.1,571.1 1112.2,570.9 1112.3,570.3 1112.5,570.6 1112.6,583.5 1112.7,578.9 1112.9,571.8 1113.0,577.2 1113.1,577.3 1113.3,576.3 1113.4,581.9 1113.5,580.5 1113.7,571.2 1113.8,570.7 1113.9,575.2 1114.1,581.0 1114.2,574.5 1114.3,581.8 1114.5,595.4 1114.6,572.5 1114.7,570.9 1114.9,574.8 1115.0,574.5 1115.1,573.8 1115.3,575.9 1115.4,582.6 1115.5,572.2 1115.7,579.0 1115.8,579.4 1115.9,576.1 1116.1,576.4 1116.2,578.5 1116.3,583.7 1116.5,573.8 1116.6,578.0 1116.7,573.7 1116.9,568.4 1117.0,574.5 1117.1,575.5 1117.3,580.2 1117.4,581.2 1117.5,575.5 1117.7,577.8 1117.8,578.2 1117.9,580.1 1118.1,579.8 1118.2,576.0 1118.3,578.0 1118.5,589.8 1118.6,580.4 1118.7,581.1 1118.9,578.0 1119.0,576.1 1119.1,581.6 1119.3,577.3 1119.4,582.7 1119.5,571.3 1119.7,567.1 1119.8,580.0 1119.9,572.3 1120.1,578.8 1120.2,578.3 1120.3,583.8 1120.5,582.8 1120.6,570.7 1120.7,577.5 1120.9,581.0 1121.0,573.5 1121.1,583.0 1121.3,567.6 1121.4,573.3 1121.5,581.1 1121.7,577.5 1121.8,574.0 1121.9,578.2 1122.1,571.2 1122.2,584.2 1122.3,585.6 1122.5,576.2 1122.6,596.0 1122.7,580.2 1122.9,575.8 1123.0,578.1 1123.1,567.4 1123.3,574.8 1123.4,581.2 1123.5,567.5 1123.7,571.7 1123.8,583.8 1123.9,574.2 1124.1,581.1 1124.2,573.9 1124.3,566.3 1124.5,581.8 1124.6,575.6 1124.7,578.7 1124.9,571.5 1125.0,573.2 1125.1,554.3 1125.3,582.1 1125.4,580.4 1125.5,581.5 1125.7,572.6 1125.8,570.6 1125.9,578.4 1126.1,584.9 1126.2,575.3 1126.3,578.7 1126.5,568.8 1126.6,564.3 1126.7,583.6 1126.9,574.8 1127.0,581.8 1127.1,562.4 1127.3,578.8 1127.4,577.2 1127.5,577.5 1127.7,566.8 1127.8,582.3 1127.9,572.8 1128.0,576.8 1128.2,567.9 1128.3,574.2 1128.4,566.8 1128.6,565.7 1128.7,577.3 1128.8,569.3 1129.0,590.3 1129.1,570.9 1129.2,588.6 1129.4,574.3 1129.5,572.9 1129.6,579.4 1129.8,575.9 1129.9,581.8 1130.0,583.7 1130.2,582.6 1130.3,574.7 1130.4,580.0 1130.6,584.7 1130.7,575.4 1130.8,575.1 1131.0,574.2 1131.1,576.0 1131.2,575.7 1131.4,577.6 1131.5,577.6 1131.6,573.6 1131.8,579.0 1131.9,574.0 1132.0,576.0 1132.2,580.5 1132.3,573.2 1132.4,574.6 1132.6,576.8 1132.7,581.2 1132.8,586.4 1133.0,574.6 1133.1,569.7 1133.2,580.1 1133.4,568.1 1133.5,561.0 1133.6,572.9 1133.8,573.1 1133.9,578.1 1134.0,579.9 1134.2,578.3 1134.3,576.5 1134.4,588.3 1134.6,569.8 1134.7,572.6 1134.8,574.6 1135.0,576.1 1135.1,574.4 1135.2,581.9 1135.4,578.1 1135.5,568.0 1135.6,575.5 1135.8,579.7 1135.9,573.3 1136.0,577.3 1136.2,573.7 1136.3,564.8 1136.4,575.0 1136.6,577.7 1136.7,576.6 1136.8,582.7 1137.0,578.7 1137.1,586.5 1137.2,576.6 1137.4,577.7 1137.5,584.8 1137.6,582.5 1137.8,579.7 1137.9,567.4 1138.0,573.4 1138.2,574.9 1138.3,577.4 1138.4,573.2 1138.6,577.5 1138.7,576.3 1138.8,583.0 1139.0,575.9 1139.1,576.9 1139.2,569.3 1139.4,583.2 1139.5,578.8 1139.6,585.4 1139.8,577.9 1139.9,576.7 1140.0,567.0 1140.2,569.2 1140.3,580.7 1140.4,574.9 1140.6,579.4 1140.7,571.4 1140.8,587.5 1141.0,584.1 1141.1,574.5 1141.2,580.0 1141.4,581.3 1141.5,582.5 1141.6,576.9 1141.8,575.4 1141.9,577.7 1142.0,587.3 1142.2,576.0 1142.3,566.4 1142.4,564.6 1142.6,567.5 1142.7,585.7 1142.8,574.8 1143.0,577.4 1143.1,569.6 1143.2,578.5 1143.4,578.9 1143.5,574.3 1143.6,562.1 1143.8,570.4 1143.9,585.7 1144.0,568.2 1144.2,572.3 1144.3,574.5 1144.4,575.9 1144.6,562.8 1144.7,587.2 1144.8,580.9 1145.0,584.0 1145.1,565.3 1145.2,571.4 1145.4,580.2 1145.5,575.5 1145.6,580.7 1145.8,577.2 1145.9,576.3 1146.0,572.4 1146.2,580.7 1146.3,588.3 1146.4,571.2 1146.6,582.2 1146.7,579.6 1146.8,572.3 1147.0,568.3 1147.1,573.6 1147.2,584.5 1147.4,558.7 1147.5,567.3 1147.6,576.8 1147.8,583.7 1147.9,585.1 1148.0,565.7 1148.2,576.1 1148.3,585.7 1148.4,582.6 1148.6,588.2 1148.7,572.5 1148.8,578.9 1149.0,571.7 1149.1,577.8 1149.2,567.8 1149.4,578.7 1149.5,574.6 1149.6,574.8 1149.8,581.3 1149.9,582.7 1150.0,577.2 1150.2,572.7 1150.3,579.3 1150.4,577.1 1150.6,569.4 1150.7,578.7 1150.8,566.2 1151.0,585.9 1151.1,582.8 1151.2,570.0 1151.4,569.5 1151.5,575.9 1151.6,579.7 1151.8,578.9 1151.9,578.3 1152.0,578.3 1152.2,560.5 1152.3,578.6 1152.4,580.3 1152.6,580.3 1152.7,579.5 1152.8,564.5 1153.0,577.1 1153.1,575.3 1153.2,578.6 1153.4,565.2 1153.5,568.3 1153.6,576.7 1153.8,576.5 1153.9,568.5 1154.0,583.3 1154.2,567.7 1154.3,574.9 1154.4,568.8 1154.6,580.3 1154.7,578.0 1154.8,581.3 1155.0,582.4 1155.1,572.8 1155.2,572.4 1155.4,579.8 1155.5,576.3 1155.6,576.2 1155.8,568.9 1155.9,577.3 1156.0,569.0 1156.2,574.0 1156.3,577.6 1156.4,572.5 1156.6,569.9 1156.7,575.2 1156.8,571.7 1157.0,577.9 1157.1,575.3 1157.2,575.6 1157.4,568.0 1157.5,573.7 1157.6,571.9 1157.8,584.4 1157.9,564.0 1158.0,579.0 1158.2,571.3 1158.3,574.7 1158.4,576.9 1158.6,574.8 1158.7,571.8 1158.8,573.8 1159.0,582.6 1159.1,582.0 1159.2,570.7 1159.4,574.3 1159.5,574.6 1159.6,580.3 1159.8,569.2 1159.9,576.3 1160.0,568.1 1160.2,579.2 1160.3,581.0 1160.4,575.9 1160.6,578.5 1160.7,582.0 1160.8,566.3 1161.0,580.8 1161.1,573.0 1161.2,576.8 1161.4,576.3 1161.5,575.9 1161.6,573.9 1161.7,583.8 1161.9,578.4 1162.0,578.8 1162.1,582.8 1162.3,584.4 1162.4,577.5 1162.5,573.4 1162.7,570.6 1162.8,582.8 1162.9,567.2 1163.1,582.1 1163.2,575.3 1163.3,571.3 1163.5,592.9 1163.6,573.7 1163.7,566.4 1163.9,587.6 1164.0,572.4 1164.1,578.5 1164.3,582.7 1164.4,589.0 1164.5,578.3 1164.7,577.3 1164.8,585.5 1164.9,571.2 1165.1,582.3 1165.2,574.8 1165.3,581.7 1165.5,517.7 1165.6,517.7 1165.7,575.3 1165.9,569.5 1166.0,568.3 1166.1,579.6 1166.3,577.5 1166.4,583.5 1166.5,580.6 1166.7,574.6 1166.8,570.7 1166.9,580.1 1167.1,578.8 1167.2,587.5 1167.3,569.3 1167.5,575.1 1167.6,576.3 1167.7,575.9 1167.9,575.6 1168.0,585.9 1168.1,584.7 1168.3,580.1 1168.4,579.4 1168.5,570.6 1168.7,582.7 1168.8,569.2 1168.9,578.6 1169.1,577.5 1169.2,573.8 1169.3,576.3 1169.5,573.8 1169.6,576.3 1169.7,581.0 1169.9,571.3 1170.0,585.9 1170.1,569.1 1170.3,579.6 1170.4,581.8 1170.5,571.3 1170.7,570.5 1170.8,583.3 1170.9,580.5 1171.1,571.9 1171.2,584.1 1171.3,577.3 1171.5,583.2 1171.6,579.0 1171.7,587.5 1171.9,572.0 1172.0,582.6 1172.1,579.5 1172.3,575.8 1172.4,578.8 1172.5,575.3 1172.7,572.9 1172.8,572.6 1172.9,569.2 1173.1,584.2 1173.2,575.5 1173.3,577.9 1173.5,580.1 1173.6,568.7 1173.7,577.7 1173.9,577.7 1174.0,571.1 1174.1,577.1 1174.3,580.0 1174.4,595.1 1174.5,575.9 1174.7,575.5 1174.8,575.9 1174.9,583.9 1175.1,583.0 1175.2,582.8 1175.3,581.3 1175.5,578.7 1175.6,577.3 1175.7,590.0 1175.9,569.8 1176.0,581.8 1176.1,576.8 1176.3,572.5 1176.4,568.4 1176.5,574.0 1176.7,576.8 1176.8,564.1 1176.9,578.2 1177.1,579.7 1177.2,575.6 1177.3,574.5 1177.5,578.5 1177.6,586.0 1177.7,579.7 1177.9,569.1 1178.0,578.6 1178.1,575.3 1178.3,577.7 1178.4,577.2 1178.5,573.2 1178.7,542.3 1178.8,572.8 1178.9,586.4 1179.1,574.7 1179.2,569.4 1179.3,577.5 1179.5,577.8 1179.6,582.4 1179.7,573.6 1179.9,579.9 1180.0,582.5 1180.1,572.1 1180.3,589.4 1180.4,581.6 1180.5,575.4 1180.7,576.5 1180.8,576.7 1180.9,575.1 1181.1,575.8 1181.2,578.2 1181.3,571.8 1181.5,574.8 1181.6,583.1 1181.7,585.4 1181.9,578.4 1182.0,580.2 1182.1,566.5 1182.3,568.2 1182.4,586.7 1182.5,575.9 1182.7,572.9 1182.8,574.1 1182.9,578.0 1183.1,580.2 1183.2,576.3 1183.3,595.2 1183.5,583.0 1183.6,574.5 1183.7,578.1 1183.9,578.5 1184.0,580.1 1184.1,577.4 1184.3,579.5" fill="none" stroke="#0000ff" stroke-width="2" stroke-linejoin="round"/></svg>
<rect x="911" y="517" width="274" height="120" fill="none" stroke="#000" stroke-width="1.6"/>
<line x1="904" y1="544.1999999999999" x2="911" y2="544.1999999999999" stroke="#000" stroke-width="1.5"/>
<text x="884.04" y="548.10" font-size="11" textLength="12.60" lengthAdjust="spacingAndGlyphs">50</text>
<line x1="904" y1="575.8" x2="911" y2="575.8" stroke="#000" stroke-width="1.5"/>
<text x="890.34" y="579.70" font-size="11" textLength="6.30" lengthAdjust="spacingAndGlyphs">0</text>
<line x1="904" y1="607.4" x2="911" y2="607.4" stroke="#000" stroke-width="1.5"/>
<text x="877.42" y="611.30" font-size="11" textLength="19.22" lengthAdjust="spacingAndGlyphs">−50</text>
<line x1="911.6" y1="637" x2="911.6" y2="643.7" stroke="#000" stroke-width="1.5"/>
<text x="908.45" y="660.60" font-size="11" textLength="6.30" lengthAdjust="spacingAndGlyphs">0</text>
<line x1="978.2" y1="637" x2="978.2" y2="643.7" stroke="#000" stroke-width="1.5"/>
<text x="968.74" y="660.60" font-size="11" textLength="18.90" lengthAdjust="spacingAndGlyphs">500</text>
<line x1="1044.8" y1="637" x2="1044.8" y2="643.7" stroke="#000" stroke-width="1.5"/>
<text x="1031.99" y="660.60" font-size="11" textLength="25.20" lengthAdjust="spacingAndGlyphs">1000</text>
<line x1="1111.4" y1="637" x2="1111.4" y2="643.7" stroke="#000" stroke-width="1.5"/>
<text x="1098.59" y="660.60" font-size="11" textLength="25.20" lengthAdjust="spacingAndGlyphs">1500</text>
<line x1="1178.0" y1="637" x2="1178.0" y2="643.7" stroke="#000" stroke-width="1.5"/>
<text x="1165.33" y="660.60" font-size="11" textLength="25.20" lengthAdjust="spacingAndGlyphs">2000</text>
<text x="1044.62" y="678.00" font-size="11" textLength="7.34" lengthAdjust="spacingAndGlyphs">X</text>
<text x="-16.99" y="0" font-size="11" textLength="33.90" lengthAdjust="spacingAndGlyphs" transform="translate(864.80 577.80) rotate(-90)">counts</text>
<text x="-19.78" y="0" font-size="11" textLength="39.16" lengthAdjust="spacingAndGlyphs" transform="translate(1193.60 575.20) rotate(90)">cut in x</text>
<rect x="1108.5" y="520" width="73.5" height="16.5" rx="2.5" fill="#fff" fill-opacity="0.8" stroke="#d6d6d6" stroke-width="1"/>
<line x1="1111.3" y1="528" x2="1133.6" y2="528" stroke="#0000ff" stroke-width="2"/>
<text x="1137.17" y="530.90" font-size="11" textLength="39.78" lengthAdjust="spacingAndGlyphs">y=1024</text>
<svg x="911" y="689" width="274" height="120" overflow="hidden"><path transform="translate(-911,-689)" d="M911.6,779.4 911.7,769.9 911.9,737.0 912.0,761.3 912.1,746.0 912.3,756.0 912.4,747.6 912.5,743.8 912.7,746.3 912.8,739.0 912.9,747.7 913.1,741.9 913.2,757.0 913.3,762.9 913.5,760.2 913.6,739.4 913.7,746.7 913.9,751.2 914.0,753.0 914.1,749.7 914.3,750.9 914.4,758.8 914.5,749.2 914.7,745.8 914.8,753.8 914.9,753.5 915.1,745.9 915.2,751.8 915.3,749.5 915.5,749.3 915.6,743.3 915.7,752.2 915.9,747.4 916.0,742.1 916.1,750.1 916.3,743.6 916.4,750.9 916.5,747.9 916.7,748.8 916.8,752.2 916.9,744.9 917.1,760.4 917.2,759.5 917.3,743.5 917.5,747.7 917.6,751.1 917.7,751.6 917.9,751.5 918.0,751.6 918.1,746.0 918.3,744.4 918.4,742.0 918.5,750.8 918.7,747.4 918.8,743.9 918.9,749.5 919.1,751.3 919.2,748.1 919.3,742.4 919.5,757.5 919.6,757.5 919.7,755.0 919.9,744.7 920.0,753.0 920.1,751.0 920.3,771.2 920.4,748.8 920.5,744.8 920.7,760.0 920.8,747.1 920.9,753.8 921.1,753.5 921.2,736.2 921.3,750.5 921.5,750.5 921.6,751.8 921.7,745.8 921.9,749.7 922.0,751.3 922.1,751.6 922.3,757.5 922.4,749.4 922.5,747.4 922.7,744.8 922.8,740.8 922.9,758.3 923.1,736.4 923.2,749.1 923.3,744.7 923.5,742.6 923.6,751.7 923.7,756.0 923.9,746.7 924.0,759.2 924.1,745.6 924.3,757.8 924.4,750.7 924.5,756.3 924.7,761.5 924.8,753.9 924.9,741.0 925.1,751.6 925.2,744.7 925.3,752.6 925.5,749.6 925.6,751.4 925.7,735.4 925.9,740.0 926.0,757.1 926.1,755.4 926.3,756.9 926.4,755.2 926.5,744.3 926.7,752.5 926.8,744.6 926.9,746.6 927.1,745.1 927.2,750.3 927.3,748.7 927.5,746.1 927.6,771.2 927.7,741.0 927.9,739.8 928.0,747.5 928.1,750.1 928.2,746.8 928.4,745.4 928.5,747.1 928.6,745.1 928.8,750.5 928.9,750.1 929.0,755.0 929.2,746.2 929.3,756.5 929.4,748.7 929.6,752.9 929.7,744.6 929.8,750.7 930.0,735.7 930.1,753.6 930.2,761.7 930.4,754.9 930.5,744.1 930.6,747.0 930.8,746.9 930.9,747.7 931.0,748.2 931.2,751.5 931.3,755.7 931.4,748.7 931.6,762.3 931.7,742.7 931.8,751.3 932.0,754.7 932.1,745.1 932.2,741.8 932.4,744.4 932.5,747.2 932.6,761.6 932.8,741.6 932.9,754.1 933.0,747.6 933.2,742.0 933.3,748.2 933.4,753.6 933.6,741.9 933.7,748.9 933.8,753.7 934.0,749.6 934.1,750.7 934.2,750.4 934.4,748.6 934.5,752.8 934.6,749.1 934.8,756.4 934.9,754.6 935.0,752.7 935.2,760.5 935.3,732.8 935.4,751.8 935.6,747.6 935.7,750.8 935.8,743.5 936.0,749.9 936.1,743.5 936.2,756.6 936.4,749.2 936.5,745.0 936.6,745.9 936.8,750.0 936.9,751.5 937.0,746.2 937.2,751.9 937.3,753.4 937.4,754.2 937.6,761.4 937.7,745.0 937.8,754.2 938.0,741.5 938.1,757.5 938.2,749.9 938.4,755.1 938.5,754.4 938.6,736.6 938.8,746.6 938.9,736.4 939.0,750.9 939.2,752.8 939.3,746.1 939.4,746.7 939.6,747.8 939.7,746.9 939.8,746.0 940.0,756.1 940.1,748.0 940.2,746.9 940.4,737.3 940.5,753.8 940.6,749.4 940.8,747.7 940.9,755.6 941.0,760.5 941.2,751.0 941.3,744.1 941.4,738.5 941.6,749.5 941.7,748.0 941.8,750.3 942.0,747.1 942.1,758.6 942.2,752.6 942.4,759.0 942.5,751.4 942.6,738.4 942.8,746.9 942.9,744.4 943.0,748.7 943.2,748.6 943.3,755.4 943.4,742.8 943.6,754.5 943.7,745.9 943.8,747.0 944.0,743.5 944.1,742.5 944.2,751.9 944.4,749.2 944.5,744.4 944.6,749.0 944.8,749.9 944.9,741.2 945.0,744.2 945.2,756.9 945.3,751.6 945.4,747.0 945.6,750.0 945.7,746.5 945.8,751.8 946.0,741.9 946.1,736.1 946.2,749.4 946.4,753.8 946.5,736.2 946.6,740.8 946.8,751.9 946.9,738.0 947.0,738.5 947.2,758.0 947.3,744.0 947.4,747.3 947.6,754.4 947.7,734.8 947.8,743.9 948.0,752.2 948.1,748.0 948.2,743.0 948.4,744.8 948.5,756.9 948.6,749.2 948.8,752.9 948.9,764.3 949.0,751.3 949.2,750.3 949.3,746.3 949.4,745.3 949.6,752.0 949.7,752.0 949.8,754.5 950.0,749.1 950.1,736.2 950.2,751.3 950.4,744.0 950.5,742.8 950.6,751.4 950.8,750.2 950.9,760.3 951.0,747.3 951.2,741.2 951.3,751.4 951.4,739.1 951.6,735.8 951.7,745.7 951.8,744.8 952.0,745.6 952.1,751.8 952.2,750.3 952.4,734.7 952.5,749.9 952.6,747.7 952.8,746.6 952.9,742.7 953.0,731.6 953.2,743.7 953.3,745.4 953.4,776.2 953.6,738.8 953.7,753.6 953.8,746.3 954.0,744.2 954.1,743.4 954.2,747.6 954.4,744.5 954.5,746.3 954.6,748.9 954.8,751.2 954.9,756.2 955.0,753.7 955.2,742.7 955.3,749.0 955.4,745.7 955.6,748.5 955.7,745.1 955.8,751.3 956.0,745.2 956.1,748.4 956.2,740.6 956.4,752.0 956.5,755.3 956.6,743.0 956.8,738.5 956.9,741.9 957.0,752.0 957.2,757.1 957.3,751.2 957.4,739.7 957.6,750.7 957.7,743.2 957.8,747.0 958.0,745.7 958.1,767.1 958.2,760.4 958.4,751.4 958.5,744.6 958.6,752.4 958.8,746.4 958.9,740.3 959.0,752.4 959.2,748.7 959.3,752.5 959.4,752.1 959.6,756.8 959.7,750.8 959.8,749.0 960.0,750.2 960.1,750.2 960.2,752.3 960.4,743.2 960.5,754.4 960.6,748.3 960.8,751.1 960.9,747.5 961.0,739.6 961.2,745.5 961.3,745.2 961.4,749.5 961.6,738.3 961.7,743.5 961.8,755.8 961.9,763.1 962.1,738.8 962.2,750.7 962.3,759.5 962.5,747.2 962.6,755.1 962.7,743.9 962.9,747.7 963.0,753.5 963.1,755.3 963.3,747.6 963.4,746.2 963.5,745.6 963.7,759.4 963.8,752.7 963.9,753.2 964.1,751.8 964.2,750.6 964.3,753.2 964.5,753.8 964.6,760.2 964.7,746.0 964.9,749.6 965.0,748.8 965.1,739.4 965.3,752.8 965.4,752.9 965.5,740.3 965.7,748.1 965.8,755.4 965.9,750.0 966.1,746.8 966.2,749.7 966.3,754.4 966.5,743.1 966.6,746.8 966.7,753.8 966.9,745.9 967.0,749.3 967.1,749.8 967.3,741.3 967.4,748.0 967.5,735.5 967.7,757.9 967.8,745.7 967.9,753.4 968.1,753.5 968.2,757.2 968.3,744.5 968.5,756.4 968.6,741.3 968.7,744.7 968.9,747.0 969.0,738.4 969.1,734.8 969.3,748.0 969.4,741.7 969.5,735.5 969.7,740.6 969.8,751.4 969.9,754.6 970.1,736.8 970.2,751.3 970.3,757.0 970.5,747.2 970.6,745.0 970.7,741.7 970.9,751.1 971.0,750.8 971.1,757.8 971.3,752.4 971.4,753.2 971.5,747.0 971.7,739.9 971.8,753.8 971.9,749.7 972.1,751.0 972.2,745.6 972.3,753.4 972.5,745.3 972.6,748.7 972.7,746.0 972.9,757.5 973.0,740.5 973.1,740.7 973.3,744.1 973.4,749.6 973.5,751.5 973.7,752.4 973.8,749.2 973.9,751.9 974.1,758.1 974.2,755.6 974.3,745.5 974.5,751.7 974.6,740.6 974.7,755.6 974.9,744.9 975.0,740.9 975.1,748.4 975.3,755.2 975.4,758.0 975.5,745.8 975.7,756.8 975.8,754.4 975.9,744.0 976.1,757.9 976.2,771.2 976.3,744.6 976.5,752.8 976.6,737.2 976.7,754.7 976.9,749.3 977.0,753.4 977.1,746.7 977.3,754.4 977.4,756.4 977.5,740.7 977.7,750.0 977.8,752.0 977.9,750.2 978.1,749.4 978.2,742.7 978.3,759.4 978.5,752.6 978.6,748.5 978.7,745.8 978.9,749.6 979.0,742.4 979.1,742.4 979.3,743.7 979.4,742.4 979.5,738.9 979.7,746.1 979.8,750.4 979.9,751.1 980.1,751.5 980.2,752.9 980.3,750.2 980.5,689.7 980.6,689.7 980.7,745.5 980.9,762.3 981.0,743.7 981.1,751.7 981.3,744.1 981.4,750.8 981.5,757.0 981.7,749.3 981.8,737.9 981.9,740.6 982.1,739.7 982.2,754.8 982.3,723.1 982.5,746.0 982.6,754.6 982.7,751.3 982.9,751.8 983.0,740.8 983.1,752.1 983.3,753.5 983.4,742.2 983.5,751.5 983.7,741.5 983.8,749.3 983.9,746.2 984.1,753.7 984.2,738.5 984.3,755.8 984.5,740.1 984.6,755.1 984.7,741.2 984.9,747.9 985.0,747.1 985.1,740.8 985.3,747.5 985.4,755.9 985.5,742.6 985.7,747.6 985.8,755.5 985.9,758.5 986.1,748.5 986.2,740.7 986.3,746.3 986.5,754.8 986.6,742.2 986.7,737.5 986.9,742.6 987.0,757.5 987.1,754.3 987.3,749.6 987.4,741.1 987.5,775.0 987.7,743.9 987.8,756.6 987.9,752.3 988.1,754.6 988.2,739.2 988.3,742.7 988.5,748.6 988.6,741.2 988.7,743.9 988.9,745.9 989.0,742.7 989.1,746.0 989.3,752.3 989.4,739.9 989.5,746.1 989.7,750.2 989.8,744.5 989.9,753.6 990.1,747.8 990.2,747.3 990.3,746.7 990.5,747.0 990.6,751.3 990.7,740.9 990.9,748.8 991.0,743.0 991.1,738.5 991.3,745.4 991.4,757.3 991.5,751.7 991.7,749.7 991.8,751.4 991.9,747.6 992.1,744.3 992.2,748.1 992.3,750.0 992.5,755.3 992.6,748.3 992.7,758.4 992.9,747.9 993.0,744.0 993.1,749.1 993.3,744.9 993.4,750.2 993.5,752.1 993.7,743.7 993.8,753.6 993.9,752.6 994.1,749.2 994.2,742.8 994.3,749.7 994.5,751.8 994.6,750.1 994.7,753.1 994.9,740.4 995.0,741.9 995.1,753.3 995.2,750.4 995.4,744.2 995.5,756.7 995.6,753.1 995.8,742.1 995.9,751.2 996.0,751.1 996.2,749.6 996.3,745.4 996.4,748.7 996.6,752.0 996.7,745.8 996.8,743.4 997.0,745.4 997.1,744.5 997.2,752.1 997.4,752.6 997.5,748.7 997.6,754.6 997.8,754.2 997.9,760.3 998.0,738.1 998.2,732.5 998.3,740.9 998.4,741.8 998.6,748.7 998.7,746.2 998.8,749.1 999.0,748.2 999.1,741.3 999.2,761.3 999.4,756.3 999.5,739.2 999.6,752.5 999.8,761.2 999.9,749.8 1000.0,761.5 1000.2,747.6 1000.3,758.6 1000.4,748.3 1000.6,745.5 1000.7,751.9 1000.8,747.4 1001.0,729.9 1001.1,757.4 1001.2,742.1 1001.4,745.4 1001.5,752.1 1001.6,746.1 1001.8,747.7 1001.9,757.0 1002.0,748.1 1002.2,756.6 1002.3,747.7 1002.4,750.2 1002.6,755.6 1002.7,749.2 1002.8,748.3 1003.0,757.5 1003.1,750.4 1003.2,753.6 1003.4,749.1 1003.5,742.1 1003.6,750.4 1003.8,740.9 1003.9,745.8 1004.0,744.7 1004.2,748.9 1004.3,754.7 1004.4,741.7 1004.6,758.8 1004.7,754.3 1004.8,754.7 1005.0,745.0 1005.1,751.3 1005.2,746.8 1005.4,748.2 1005.5,754.2 1005.6,751.5 1005.8,747.0 1005.9,746.9 1006.0,746.9 1006.2,755.6 1006.3,750.6 1006.4,746.7 1006.6,750.9 1006.7,752.9 1006.8,745.8 1007.0,754.9 1007.1,738.9 1007.2,743.9 1007.4,749.0 1007.5,753.4 1007.6,737.1 1007.8,746.9 1007.9,755.3 1008.0,739.3 1008.2,749.8 1008.3,751.4 1008.4,740.5 1008.6,748.9 1008.7,749.8 1008.8,754.4 1009.0,758.6 1009.1,753.1 1009.2,743.2 1009.4,741.8 1009.5,745.0 1009.6,746.8 1009.8,743.6 1009.9,760.0 1010.0,756.0 1010.2,744.7 1010.3,749.6 1010.4,742.5 1010.6,742.9 1010.7,754.7 1010.8,746.6 1011.0,764.7 1011.1,754.2 1011.2,744.0 1011.4,754.9 1011.5,745.0 1011.6,752.0 1011.8,746.6 1011.9,744.3 1012.0,747.5 1012.2,737.6 1012.3,743.5 1012.4,779.4 1012.6,747.6 1012.7,745.1 1012.8,746.4 1013.0,746.0 1013.1,747.5 1013.2,754.4 1013.4,760.7 1013.5,748.1 1013.6,746.4 1013.8,744.8 1013.9,752.5 1014.0,747.7 1014.2,742.7 1014.3,750.7 1014.4,745.4 1014.6,739.2 1014.7,750.9 1014.8,749.1 1015.0,757.6 1015.1,746.3 1015.2,751.4 1015.4,748.8 1015.5,758.0 1015.6,758.0 1015.8,752.3 1015.9,748.7 1016.0,725.7 1016.2,750.8 1016.3,745.6 1016.4,735.7 1016.6,744.5 1016.7,750.5 1016.8,734.3 1017.0,755.7 1017.1,740.2 1017.2,748.1 1017.4,756.4 1017.5,750.0 1017.6,754.8 1017.8,747.6 1017.9,750.8 1018.0,745.8 1018.2,744.1 1018.3,754.1 1018.4,750.7 1018.6,749.6 1018.7,747.5 1018.8,750.5 1019.0,750.0 1019.1,744.1 1019.2,738.9 1019.4,752.3 1019.5,750.1 1019.6,747.8 1019.8,758.2 1019.9,749.1 1020.0,737.7 1020.2,752.6 1020.3,748.5 1020.4,743.4 1020.6,740.4 1020.7,746.9 1020.8,741.9 1021.0,750.5 1021.1,747.6 1021.2,748.5 1021.4,740.6 1021.5,762.0 1021.6,752.8 1021.8,742.5 1021.9,754.6 1022.0,748.4 1022.2,745.8 1022.3,745.8 1022.4,751.9 1022.6,746.3 1022.7,754.8 1022.8,746.2 1023.0,745.6 1023.1,740.8 1023.2,760.0 1023.4,741.5 1023.5,758.0 1023.6,747.4 1023.8,753.7 1023.9,753.5 1024.0,747.4 1024.2,757.1 1024.3,745.0 1024.4,761.9 1024.6,749.0 1024.7,747.0 1024.8,743.6 1025.0,740.6 1025.1,753.0 1025.2,753.2 1025.4,751.7 1025.5,747.5 1025.6,753.3 1025.8,750.1 1025.9,745.4 1026.0,746.8 1026.2,752.6 1026.3,750.1 1026.4,751.4 1026.6,742.3 1026.7,743.7 1026.8,741.6 1027.0,757.3 1027.1,737.8 1027.2,750.4 1027.4,755.2 1027.5,746.2 1027.6,756.5 1027.8,758.5 1027.9,752.2 1028.0,732.5 1028.2,744.5 1028.3,741.0 1028.4,736.9 1028.5,750.9 1028.7,742.5 1028.8,748.7 1028.9,749.2 1029.1,748.8 1029.2,737.1 1029.3,745.7 1029.5,744.8 1029.6,750.0 1029.7,752.8 1029.9,748.1 1030.0,759.1 1030.1,746.8 1030.3,745.6 1030.4,737.6 1030.5,751.6 1030.7,745.8 1030.8,745.5 1030.9,744.9 1031.1,744.6 1031.2,739.6 1031.3,749.9 1031.5,751.9 1031.6,751.4 1031.7,737.9 1031.9,745.1 1032.0,748.4 1032.1,747.9 1032.3,752.4 1032.4,748.8 1032.5,746.4 1032.7,749.9 1032.8,746.2 1032.9,731.9 1033.1,743.1 1033.2,753.5 1033.3,756.0 1033.5,744.1 1033.6,751.7 1033.7,747.6 1033.9,742.5 1034.0,748.3 1034.1,751.4 1034.3,744.8 1034.4,753.5 1034.5,745.0 1034.7,746.8 1034.8,748.8 1034.9,745.0 1035.1,748.5 1035.2,746.3 1035.3,753.8 1035.5,750.2 1035.6,750.4 1035.7,757.3 1035.9,749.6 1036.0,744.7 1036.1,741.6 1036.3,745.5 1036.4,747.2 1036.5,730.1 1036.7,742.6 1036.8,760.0 1036.9,749.1 1037.1,749.6 1037.2,748.2 1037.3,749.8 1037.5,744.0 1037.6,745.1 1037.7,748.7 1037.9,744.2 1038.0,748.0 1038.1,751.5 1038.3,748.3 1038.4,741.7 1038.5,744.8 1038.7,752.1 1038.8,749.6 1038.9,743.8 1039.1,755.1 1039.2,749.9 1039.3,750.9 1039.5,745.4 1039.6,748.6 1039.7,743.9 1039.9,754.0 1040.0,741.5 1040.1,752.2 1040.3,748.9 1040.4,749.6 1040.5,737.7 1040.7,742.0 1040.8,752.8 1040.9,745.4 1041.1,750.7 1041.2,761.3 1041.3,738.4 1041.5,751.6 1041.6,752.3 1041.7,750.1 1041.9,755.8 1042.0,746.2 1042.1,747.0 1042.3,745.9 1042.4,751.2 1042.5,757.0 1042.7,739.8 1042.8,744.4 1042.9,750.8 1043.1,750.7 1043.2,739.8 1043.3,744.7 1043.5,742.8 1043.6,759.6 1043.7,746.6 1043.9,752.8 1044.0,750.8 1044.1,743.5 1044.3,754.4 1044.4,752.3 1044.5,748.9 1044.7,741.7 1044.8,752.1 1044.9,738.7 1045.1,749.4 1045.2,750.3 1045.3,753.3 1045.5,744.8 1045.6,744.7 1045.7,745.7 1045.9,751.1 1046.0,750.2 1046.1,747.3 1046.3,755.2 1046.4,752.7 1046.5,747.5 1046.7,747.0 1046.8,737.3 1046.9,747.3 1047.1,749.4 1047.2,744.8 1047.3,752.0 1047.5,735.0 1047.6,747.2 1047.7,750.9 1047.9,738.1 1048.0,754.9 1048.1,742.4 1048.3,746.3 1048.4,748.7 1048.5,744.8 1048.7,744.6 1048.8,747.7 1048.9,744.9 1049.1,743.9 1049.2,748.5 1049.3,750.1 1049.5,746.8 1049.6,755.6 1049.7,749.0 1049.9,753.9 1050.0,742.9 1050.1,741.8 1050.3,747.9 1050.4,744.6 1050.5,752.1 1050.7,745.2 1050.8,747.8 1050.9,746.1 1051.1,750.3 1051.2,750.4 1051.3,746.4 1051.5,751.0 1051.6,746.9 1051.7,742.0 1051.9,742.7 1052.0,736.4 1052.1,748.4 1052.3,762.3 1052.4,753.3 1052.5,757.8 1052.7,745.5 1052.8,755.2 1052.9,753.3 1053.1,752.1 1053.2,747.8 1053.3,742.2 1053.5,736.5 1053.6,740.6 1053.7,737.5 1053.9,746.1 1054.0,752.7 1054.1,741.5 1054.3,753.5 1054.4,742.1 1054.5,742.0 1054.7,751.2 1054.8,742.3 1054.9,753.6 1055.1,752.8 1055.2,744.7 1055.3,745.2 1055.5,757.5 1055.6,750.5 1055.7,745.7 1055.9,754.2 1056.0,739.4 1056.1,748.9 1056.3,753.0 1056.4,748.2 1056.5,745.0 1056.7,736.9 1056.8,750.3 1056.9,743.6 1057.1,750.6 1057.2,744.1 1057.3,751.1 1057.5,748.9 1057.6,761.5 1057.7,746.5 1057.9,752.1 1058.0,746.3 1058.1,747.5 1058.3,755.7 1058.4,744.7 1058.5,745.7 1058.7,739.1 1058.8,749.1 1058.9,748.2 1059.1,746.7 1059.2,748.9 1059.3,757.2 1059.5,742.7 1059.6,741.4 1059.7,757.3 1059.9,743.0 1060.0,751.5 1060.1,743.4 1060.3,741.7 1060.4,745.3 1060.5,743.6 1060.7,752.3 1060.8,748.1 1060.9,751.7 1061.1,746.2 1061.2,758.4 1061.3,756.6 1061.5,752.2 1061.6,764.6 1061.7,762.6 1061.8,754.7 1062.0,750.3 1062.1,747.9 1062.2,744.0 1062.4,746.5 1062.5,742.9 1062.6,752.9 1062.8,753.2 1062.9,755.6 1063.0,749.8 1063.2,741.6 1063.3,748.2 1063.4,734.5 1063.6,738.2 1063.7,751.7 1063.8,745.3 1064.0,746.0 1064.1,741.0 1064.2,743.2 1064.4,743.7 1064.5,754.9 1064.6,739.1 1064.8,746.5 1064.9,748.9 1065.0,742.1 1065.2,766.5 1065.3,740.9 1065.4,753.3 1065.6,756.4 1065.7,753.9 1065.8,749.9 1066.0,742.1 1066.1,744.4 1066.2,749.2 1066.4,751.9 1066.5,737.4 1066.6,749.5 1066.8,752.4 1066.9,760.8 1067.0,748.2 1067.2,732.3 1067.3,740.5 1067.4,737.8 1067.6,751.5 1067.7,755.1 1067.8,749.8 1068.0,757.2 1068.1,757.6 1068.2,745.1 1068.4,760.6 1068.5,741.5 1068.6,762.3 1068.8,748.9 1068.9,745.2 1069.0,742.7 1069.2,754.3 1069.3,743.1 1069.4,741.2 1069.6,742.5 1069.7,743.1 1069.8,738.3 1070.0,745.3 1070.1,749.9 1070.2,745.7 1070.4,745.1 1070.5,748.4 1070.6,748.7 1070.8,751.2 1070.9,739.4 1071.0,742.8 1071.2,746.9 1071.3,749.8 1071.4,744.8 1071.6,748.4 1071.7,737.7 1071.8,753.4 1072.0,745.4 1072.1,749.9 1072.2,742.8 1072.4,747.6 1072.5,745.0 1072.6,746.7 1072.8,757.5 1072.9,748.7 1073.0,748.5 1073.2,740.1 1073.3,746.1 1073.4,757.7 1073.6,748.0 1073.7,751.2 1073.8,747.6 1074.0,753.6 1074.1,753.6 1074.2,752.1 1074.4,761.5 1074.5,761.6 1074.6,762.2 1074.8,738.9 1074.9,744.0 1075.0,745.4 1075.2,745.0 1075.3,756.8 1075.4,755.3 1075.6,749.8 1075.7,746.8 1075.8,758.8 1076.0,739.7 1076.1,748.8 1076.2,757.2 1076.4,752.8 1076.5,745.9 1076.6,745.0 1076.8,752.7 1076.9,740.4 1077.0,749.3 1077.2,745.8 1077.3,747.5 1077.4,749.4 1077.6,749.3 1077.7,747.2 1077.8,754.0 1078.0,746.0 1078.1,747.8 1078.2,750.7 1078.4,744.1 1078.5,754.1 1078.6,753.3 1078.8,751.5 1078.9,752.1 1079.0,763.6 1079.2,741.9 1079.3,739.1 1079.4,744.1 1079.6,745.6 1079.7,739.3 1079.8,737.0 1080.0,741.8 1080.1,747.6 1080.2,748.2 1080.4,751.8 1080.5,754.8 1080.6,755.5 1080.8,755.5 1080.9,745.2 1081.0,740.4 1081.2,755.4 1081.3,747.4 1081.4,744.7 1081.6,759.3 1081.7,757.8 1081.8,743.5 1082.0,752.7 1082.1,757.6 1082.2,735.8 1082.4,732.9 1082.5,758.1 1082.6,763.9 1082.8,751.2 1082.9,761.1 1083.0,739.0 1083.2,754.2 1083.3,733.8 1083.4,754.2 1083.6,747.4 1083.7,754.5 1083.8,743.0 1084.0,741.9 1084.1,743.4 1084.2,751.6 1084.4,747.0 1084.5,762.6 1084.6,754.9 1084.8,751.2 1084.9,740.6 1085.0,755.8 1085.2,746.6 1085.3,738.4 1085.4,751.8 1085.6,748.2 1085.7,749.6 1085.8,757.3 1086.0,747.9 1086.1,747.9 1086.2,750.7 1086.4,741.7 1086.5,751.6 1086.6,744.7 1086.8,735.9 1086.9,753.4 1087.0,748.1 1087.2,754.4 1087.3,746.9 1087.4,756.2 1087.6,739.4 1087.7,742.0 1087.8,756.7 1088.0,755.4 1088.1,746.1 1088.2,747.1 1088.4,745.0 1088.5,747.2 1088.6,743.7 1088.8,745.6 1088.9,749.9 1089.0,744.2 1089.2,741.0 1089.3,749.5 1089.4,743.1 1089.6,745.5 1089.7,756.4 1089.8,744.9 1090.0,746.9 1090.1,748.5 1090.2,752.0 1090.4,749.9 1090.5,746.9 1090.6,743.5 1090.8,745.1 1090.9,759.0 1091.0,752.1 1091.2,748.2 1091.3,745.4 1091.4,756.4 1091.6,750.7 1091.7,751.7 1091.8,749.2 1092.0,758.7 1092.1,754.2 1092.2,742.4 1092.4,737.5 1092.5,752.2 1092.6,743.8 1092.8,747.5 1092.9,751.8 1093.0,747.1 1093.2,748.7 1093.3,746.4 1093.4,748.9 1093.6,743.0 1093.7,747.8 1093.8,744.7 1094.0,750.6 1094.1,754.6 1094.2,750.1 1094.4,751.8 1094.5,742.8 1094.6,749.6 1094.8,753.9 1094.9,740.0 1095.0,739.8 1095.1,751.5 1095.3,737.8 1095.4,746.6 1095.5,750.9 1095.7,756.6 1095.8,749.3 1095.9,746.7 1096.1,741.4 1096.2,749.3 1096.3,754.3 1096.5,737.7 1096.6,745.5 1096.7,737.5 1096.9,735.4 1097.0,743.7 1097.1,745.3 1097.3,746.0 1097.4,747.5 1097.5,746.9 1097.7,751.0 1097.8,736.4 1097.9,748.8 1098.1,758.8 1098.2,750.3 1098.3,740.9 1098.5,738.7 1098.6,737.1 1098.7,755.7 1098.9,748.2 1099.0,739.0 1099.1,739.5 1099.3,747.7 1099.4,752.4 1099.5,749.5 1099.7,744.4 1099.8,757.1 1099.9,746.5 1100.1,743.6 1100.2,750.6 1100.3,742.3 1100.5,751.9 1100.6,750.3 1100.7,739.3 1100.9,754.1 1101.0,745.5 1101.1,739.1 1101.3,749.4 1101.4,744.3 1101.5,749.4 1101.7,748.4 1101.8,750.2 1101.9,753.4 1102.1,747.5 1102.2,738.1 1102.3,746.9 1102.5,739.8 1102.6,747.5 1102.7,749.3 1102.9,749.2 1103.0,754.0 1103.1,750.2 1103.3,752.1 1103.4,748.8 1103.5,760.1 1103.7,743.9 1103.8,743.1 1103.9,764.5 1104.1,738.8 1104.2,752.7 1104.3,689.7 1104.5,689.7 1104.6,749.1 1104.7,747.2 1104.9,752.5 1105.0,755.1 1105.1,744.8 1105.3,746.2 1105.4,744.2 1105.5,741.7 1105.7,748.1 1105.8,753.4 1105.9,751.9 1106.1,750.2 1106.2,748.2 1106.3,740.2 1106.5,745.5 1106.6,763.4 1106.7,745.4 1106.9,747.8 1107.0,756.2 1107.1,756.6 1107.3,749.9 1107.4,748.2 1107.5,752.0 1107.7,742.2 1107.8,752.2 1107.9,746.8 1108.1,753.6 1108.2,739.7 1108.3,741.8 1108.5,745.1 1108.6,738.6 1108.7,756.2 1108.9,756.7 1109.0,734.5 1109.1,744.3 1109.3,749.7 1109.4,745.1 1109.5,748.0 1109.7,756.9 1109.8,754.4 1109.9,753.4 1110.1,744.4 1110.2,742.2 1110.3,740.4 1110.5,746.1 1110.6,753.3 1110.7,743.8 1110.9,748.0 1111.0,753.9 1111.1,750.7 1111.3,748.5 1111.4,749.2 1111.5,748.4 1111.7,747.3 1111.8,739.9 1111.9,749.2 1112.1,754.1 1112.2,742.3 1112.3,744.0 1112.5,756.9 1112.6,747.7 1112.7,746.5 1112.9,749.6 1113.0,739.2 1113.1,744.7 1113.3,736.7 1113.4,744.3 1113.5,749.0 1113.7,744.9 1113.8,748.4 1113.9,748.5 1114.1,744.4 1114.2,744.3 1114.3,746.2 1114.5,755.0 1114.6,748.3 1114.7,744.7 1114.9,751.0 1115.0,741.1 1115.1,739.3 1115.3,748.5 1115.4,749.7 1115.5,743.8 1115.7,741.0 1115.8,750.8 1115.9,749.6 1116.1,745.7 1116.2,751.6 1116.3,736.6 1116.5,742.1 1116.6,744.3 1116.7,752.7 1116.9,755.2 1117.0,760.4 1117.1,748.2 1117.3,752.5 1117.4,748.0 1117.5,741.8 1117.7,749.5 1117.8,759.1 1117.9,745.8 1118.1,746.9 1118.2,743.8 1118.3,753.2 1118.5,745.8 1118.6,736.6 1118.7,753.4 1118.9,754.1 1119.0,753.8 1119.1,750.1 1119.3,747.6 1119.4,740.5 1119.5,751.0 1119.7,756.7 1119.8,745.8 1119.9,752.9 1120.1,756.1 1120.2,751.5 1120.3,746.2 1120.5,748.3 1120.6,748.6 1120.7,754.1 1120.9,749.4 1121.0,756.0 1121.1,756.6 1121.3,744.0 1121.4,759.4 1121.5,738.8 1121.7,748.0 1121.8,747.3 1121.9,751.0 1122.1,757.0 1122.2,743.3 1122.3,743.4 1122.5,747.5 1122.6,748.8 1122.7,741.7 1122.9,750.7 1123.0,749.0 1123.1,746.9 1123.3,745.5 1123.4,740.0 1123.5,752.2 1123.7,762.6 1123.8,743.2 1123.9,747.5 1124.1,744.3 1124.2,755.5 1124.3,751.9 1124.5,753.5 1124.6,749.2 1124.7,750.5 1124.9,746.4 1125.0,759.1 1125.1,752.4 1125.3,747.9 1125.4,746.8 1125.5,746.0 1125.7,758.4 1125.8,748.2 1125.9,746.0 1126.1,738.0 1126.2,759.3 1126.3,749.4 1126.5,748.8 1126.6,758.7 1126.7,748.4 1126.9,747.7 1127.0,744.7 1127.1,762.5 1127.3,742.5 1127.4,751.9 1127.5,737.7 1127.7,746.6 1127.8,755.1 1127.9,750.3 1128.0,738.3 1128.2,752.5 1128.3,753.4 1128.4,747.5 1128.6,753.2 1128.7,745.7 1128.8,760.5 1129.0,741.2 1129.1,757.3 1129.2,743.0 1129.4,741.9 1129.5,743.5 1129.6,759.5 1129.8,743.9 1129.9,736.8 1130.0,749.2 1130.2,740.0 1130.3,753.8 1130.4,741.8 1130.6,746.0 1130.7,742.9 1130.8,749.2 1131.0,744.7 1131.1,758.7 1131.2,739.9 1131.4,751.9 1131.5,749.8 1131.6,748.4 1131.8,749.6 1131.9,748.2 1132.0,744.7 1132.2,749.8 1132.3,757.2 1132.4,742.4 1132.6,748.6 1132.7,753.9 1132.8,745.5 1133.0,753.1 1133.1,743.7 1133.2,742.5 1133.4,752.1 1133.5,745.2 1133.6,750.7 1133.8,742.6 1133.9,751.7 1134.0,740.9 1134.2,753.2 1134.3,750.8 1134.4,748.4 1134.6,750.2 1134.7,745.8 1134.8,752.7 1135.0,747.8 1135.1,757.3 1135.2,747.2 1135.4,763.0 1135.5,735.8 1135.6,748.5 1135.8,751.3 1135.9,746.3 1136.0,732.2 1136.2,761.3 1136.3,751.3 1136.4,740.7 1136.6,753.6 1136.7,754.1 1136.8,746.7 1137.0,748.8 1137.1,750.9 1137.2,757.2 1137.4,746.4 1137.5,754.3 1137.6,738.4 1137.8,749.8 1137.9,746.0 1138.0,746.7 1138.2,749.4 1138.3,746.2 1138.4,746.4 1138.6,756.4 1138.7,745.0 1138.8,753.2 1139.0,746.6 1139.1,749.4 1139.2,726.9 1139.4,738.1 1139.5,747.0 1139.6,757.9 1139.8,735.9 1139.9,756.0 1140.0,755.0 1140.2,743.5 1140.3,746.4 1140.4,742.9 1140.6,750.5 1140.7,743.6 1140.8,744.8 1141.0,764.0 1141.1,743.8 1141.2,746.0 1141.4,742.5 1141.5,751.1 1141.6,755.5 1141.8,749.2 1141.9,750.6 1142.0,747.3 1142.2,753.0 1142.3,760.3 1142.4,742.7 1142.6,743.1 1142.7,746.1 1142.8,757.6 1143.0,747.4 1143.1,742.4 1143.2,740.3 1143.4,737.0 1143.5,747.6 1143.6,748.0 1143.8,744.7 1143.9,755.4 1144.0,750.7 1144.2,748.7 1144.3,752.2 1144.4,743.5 1144.6,749.5 1144.7,751.2 1144.8,745.2 1145.0,750.2 1145.1,745.2 1145.2,740.8 1145.4,750.7 1145.5,761.5 1145.6,753.5 1145.8,744.6 1145.9,764.1 1146.0,744.9 1146.2,746.4 1146.3,753.1 1146.4,761.9 1146.6,737.1 1146.7,740.8 1146.8,753.4 1147.0,777.5 1147.1,751.5 1147.2,748.1 1147.4,743.8 1147.5,753.4 1147.6,740.1 1147.8,750.7 1147.9,747.6 1148.0,746.9 1148.2,755.2 1148.3,755.7 1148.4,747.3 1148.6,747.2 1148.7,754.8 1148.8,747.0 1149.0,741.3 1149.1,739.7 1149.2,755.0 1149.4,746.1 1149.5,739.8 1149.6,738.5 1149.8,753.0 1149.9,751.5 1150.0,751.4 1150.2,745.4 1150.3,750.4 1150.4,748.8 1150.6,741.6 1150.7,747.2 1150.8,747.2 1151.0,747.6 1151.1,741.9 1151.2,754.1 1151.4,751.0 1151.5,747.1 1151.6,752.0 1151.8,746.5 1151.9,758.0 1152.0,744.8 1152.2,742.5 1152.3,752.2 1152.4,754.9 1152.6,746.3 1152.7,746.2 1152.8,746.7 1153.0,752.0 1153.1,739.1 1153.2,750.7 1153.4,740.4 1153.5,746.4 1153.6,744.6 1153.8,746.0 1153.9,765.1 1154.0,751.1 1154.2,751.3 1154.3,761.4 1154.4,757.5 1154.6,747.5 1154.7,746.9 1154.8,743.2 1155.0,751.1 1155.1,757.5 1155.2,758.1 1155.4,748.4 1155.5,744.3 1155.6,744.9 1155.8,742.9 1155.9,740.2 1156.0,755.2 1156.2,745.4 1156.3,747.6 1156.4,750.5 1156.6,740.0 1156.7,752.6 1156.8,742.9 1157.0,748.3 1157.1,743.2 1157.2,747.5 1157.4,744.5 1157.5,749.6 1157.6,747.0 1157.8,743.0 1157.9,749.0 1158.0,743.7 1158.2,741.9 1158.3,752.0 1158.4,753.6 1158.6,751.6 1158.7,746.9 1158.8,741.3 1159.0,741.8 1159.1,751.9 1159.2,745.2 1159.4,751.9 1159.5,757.5 1159.6,747.0 1159.8,741.7 1159.9,754.6 1160.0,748.0 1160.2,762.3 1160.3,750.5 1160.4,754.9 1160.6,736.7 1160.7,736.3 1160.8,748.6 1161.0,749.1 1161.1,747.5 1161.2,737.2 1161.4,747.6 1161.5,747.8 1161.6,752.9 1161.7,747.2 1161.9,749.7 1162.0,747.4 1162.1,745.0 1162.3,744.8 1162.4,752.4 1162.5,758.0 1162.7,752.7 1162.8,747.2 1162.9,754.3 1163.1,754.2 1163.2,749.7 1163.3,754.5 1163.5,738.5 1163.6,752.9 1163.7,752.2 1163.9,734.3 1164.0,746.3 1164.1,739.8 1164.3,742.0 1164.4,747.6 1164.5,750.3 1164.7,735.9 1164.8,745.3 1164.9,754.0 1165.1,750.0 1165.2,748.9 1165.3,753.2 1165.5,739.8 1165.6,758.7 1165.7,756.4 1165.9,746.4 1166.0,758.5 1166.1,760.7 1166.3,751.6 1166.4,748.5 1166.5,760.5 1166.7,736.6 1166.8,753.6 1166.9,741.1 1167.1,747.3 1167.2,747.4 1167.3,746.8 1167.5,748.0 1167.6,748.1 1167.7,742.7 1167.9,750.8 1168.0,752.0 1168.1,749.7 1168.3,739.2 1168.4,748.7 1168.5,750.0 1168.7,736.7 1168.8,749.0 1168.9,742.5 1169.1,749.7 1169.2,752.4 1169.3,742.3 1169.5,749.6 1169.6,741.6 1169.7,748.7 1169.9,750.9 1170.0,756.3 1170.1,739.1 1170.3,745.2 1170.4,746.3 1170.5,742.4 1170.7,737.8 1170.8,750.3 1170.9,751.8 1171.1,741.1 1171.2,752.1 1171.3,773.1 1171.5,739.2 1171.6,744.7 1171.7,748.6 1171.9,750.7 1172.0,744.1 1172.1,745.8 1172.3,745.0 1172.4,756.6 1172.5,747.7 1172.7,749.6 1172.8,754.7 1172.9,740.6 1173.1,747.4 1173.2,750.9 1173.3,743.2 1173.5,749.3 1173.6,752.3 1173.7,755.3 1173.9,746.2 1174.0,742.0 1174.1,748.0 1174.3,755.0 1174.4,750.7 1174.5,746.9 1174.7,755.3 1174.8,733.2 1174.9,746.4 1175.1,752.6 1175.2,752.4 1175.3,749.8 1175.5,752.2 1175.6,750.8 1175.7,740.2 1175.9,755.6 1176.0,753.7 1176.1,740.4 1176.3,745.3 1176.4,739.3 1176.5,769.2 1176.7,740.4 1176.8,752.3 1176.9,747.3 1177.1,745.3 1177.2,740.4 1177.3,742.4 1177.5,751.5 1177.6,744.8 1177.7,742.3 1177.9,741.4 1178.0,741.6 1178.1,746.5 1178.3,750.8 1178.4,748.6 1178.5,780.7 1178.7,744.2 1178.8,741.1 1178.9,747.7 1179.1,745.8 1179.2,744.3 1179.3,751.5 1179.5,743.5 1179.6,749.7 1179.7,753.4 1179.9,741.7 1180.0,744.5 1180.1,754.1 1180.3,746.8 1180.4,743.3 1180.5,752.9 1180.7,739.9 1180.8,746.7 1180.9,742.3 1181.1,758.2 1181.2,739.7 1181.3,750.7 1181.5,749.5 1181.6,750.9 1181.7,742.6 1181.9,746.9 1182.0,739.2 1182.1,739.1 1182.3,750.5 1182.4,753.3 1182.5,740.8 1182.7,745.2 1182.8,744.9 1182.9,752.1 1183.1,749.8 1183.2,754.7 1183.3,766.2 1183.5,743.4 1183.6,749.0 1183.7,745.1 1183.9,753.4 1184.0,749.9 1184.1,745.9 1184.3,754.5" fill="none" stroke="#0000ff" stroke-width="2" stroke-linejoin="round"/></svg>
<rect x="911" y="689" width="274" height="120" fill="none" stroke="#000" stroke-width="1.6"/>
<line x1="904" y1="716.1999999999999" x2="911" y2="716.1999999999999" stroke="#000" stroke-width="1.5"/>
<text x="884.04" y="720.10" font-size="11" textLength="12.60" lengthAdjust="spacingAndGlyphs">50</text>
<line x1="904" y1="747.8" x2="911" y2="747.8" stroke="#000" stroke-width="1.5"/>
<text x="890.34" y="751.70" font-size="11" textLength="6.30" lengthAdjust="spacingAndGlyphs">0</text>
<line x1="904" y1="779.4" x2="911" y2="779.4" stroke="#000" stroke-width="1.5"/>
<text x="877.42" y="783.30" font-size="11" textLength="19.22" lengthAdjust="spacingAndGlyphs">−50</text>
<line x1="911.6" y1="809" x2="911.6" y2="815.7" stroke="#000" stroke-width="1.5"/>
<text x="908.45" y="832.60" font-size="11" textLength="6.30" lengthAdjust="spacingAndGlyphs">0</text>
<line x1="978.2" y1="809" x2="978.2" y2="815.7" stroke="#000" stroke-width="1.5"/>
<text x="968.74" y="832.60" font-size="11" textLength="18.90" lengthAdjust="spacingAndGlyphs">500</text>
<line x1="1044.8" y1="809" x2="1044.8" y2="815.7" stroke="#000" stroke-width="1.5"/>
<text x="1031.99" y="832.60" font-size="11" textLength="25.20" lengthAdjust="spacingAndGlyphs">1000</text>
<line x1="1111.4" y1="809" x2="1111.4" y2="815.7" stroke="#000" stroke-width="1.5"/>
<text x="1098.59" y="832.60" font-size="11" textLength="25.20" lengthAdjust="spacingAndGlyphs">1500</text>
<line x1="1178.0" y1="809" x2="1178.0" y2="815.7" stroke="#000" stroke-width="1.5"/>
<text x="1165.33" y="832.60" font-size="11" textLength="25.20" lengthAdjust="spacingAndGlyphs">2000</text>
<text x="1044.63" y="850.00" font-size="11" textLength="7.34" lengthAdjust="spacingAndGlyphs">Y</text>
<text x="-16.99" y="0" font-size="11" textLength="33.90" lengthAdjust="spacingAndGlyphs" transform="translate(864.80 750.90) rotate(-90)">counts</text>
<text x="-19.77" y="0" font-size="11" textLength="39.05" lengthAdjust="spacingAndGlyphs" transform="translate(1193.60 748.90) rotate(90)">cut in y</text>
<rect x="1108.5" y="692" width="73.5" height="16.5" rx="2.5" fill="#fff" fill-opacity="0.8" stroke="#d6d6d6" stroke-width="1"/>
<line x1="1111.3" y1="700" x2="1133.6" y2="700" stroke="#0000ff" stroke-width="2"/>
<text x="1137.06" y="702.90" font-size="11" textLength="39.89" lengthAdjust="spacingAndGlyphs">x=1024</text>
</svg>
<script>
(function(){
var c=document.getElementById('img');var g=c.getContext('2d');
var W=570,H=570;var im=g.createImageData(W,H);var d=im.data;
var s=123456789;function rnd(){s^=s<<13;s>>>=0;s^=s>>>17;s^=s<<5;s>>>=0;return s/4294967296;}
function gauss(){var u=rnd()||1e-9,v=rnd();return Math.sqrt(-2*Math.log(u))*Math.cos(6.283185*v);}
var VMIN=-12.99,VMAX=12.49,SIG=9.5,MU=-0.5;
var cols=[35,71,107,142,178,214,249,285,321,357,392,428,463,499,535];
var N=new Float32Array(W*H);for(var i=0;i<W*H;i++)N[i]=gauss();
var RO=new Float32Array(H);for(var i=0;i<H;i++)RO[i]=gauss();var GS=9,GW=Math.ceil(W/GS)+2,GH=Math.ceil(H/GS)+2;var G=new Float32Array(GW*GH);for(var i=0;i<GW*GH;i++)G[i]=gauss();
function vn(x,y){var fx=x/GS,fy=y/GS,ix=Math.floor(fx),iy=Math.floor(fy),tx=fx-ix,ty=fy-iy;tx=tx*tx*(3-2*tx);ty=ty*ty*(3-2*ty);
 var a=G[iy*GW+ix],b=G[iy*GW+ix+1],c=G[(iy+1)*GW+ix],e=G[(iy+1)*GW+ix+1];return (a*(1-tx)+b*tx)*(1-ty)+(c*(1-tx)+e*tx)*ty;}
for(var y=0;y<H;y++){
 for(var x=0;x<W;x++){
  var i0=y*W+x;var a=N[i0]*100;
  if(x>0)a+=N[i0-1];if(x<W-1)a+=N[i0+1];if(y>0)a+=N[i0-W];if(y<H-1)a+=N[i0+W];
  a/=Math.sqrt(100*100+4);
  var v=MU+SIG*a+1.5*vn(x,y)+-3*(y/H-0.5)+0.8*RO[y];
  if(y<28) v+= 10*(y<13?1:Math.max(0,1-(y-13)/15))*(x<30?0.5+x/60:1);
  if(y>550&&y<567) v+= 8*Math.min(1,(y-550)/4)*(y>564?0.6:1);
  if(x<5) v+=4;
  for(var k=0;k<cols.length;k++){var dx=Math.abs(x+0.5-cols[k]);if(dx<2.2){var w=(dx<1.1?1:(y<20?0.8:0.3));if(y<50)v-=20*w*(y<16?1:Math.max(0,0.6-(y-16)/57));if(y>550)v-=20*0.4*w;}}
  var cx=x,cy=H-y;var rr=Math.sqrt(cx*cx+cy*cy);if(rr<22)v-=(rr<14?22:22*(1-(rr-14)/8));else if(rr<40&&rr>28)v+=5;
  var rx=W-x;var r2=Math.sqrt(rx*rx+cy*cy);if(r2<22)v-=(r2<14?20:20*(1-(r2-14)/8));else if(r2<36&&r2>26)v+=4;
  if(x>W-3)v-=6;
  var t=(v-VMIN)/(VMAX-VMIN);if(t<0)t=0;if(t>1)t=1;
  var r=0.0416+0.9584*t/0.365079,gg=(t-0.365079)/0.380952,b=(t-0.746032)/0.253968;
  r=r<0?0:(r>1?1:r);gg=gg<0?0:(gg>1?1:gg);b=b<0?0:(b>1?1:b);
  var i=i0*4;d[i]=r*255;d[i+1]=gg*255;d[i+2]=b*255;d[i+3]=255;
 }
}
g.putImageData(im,0,0);
})();
</script>
</body></html>
